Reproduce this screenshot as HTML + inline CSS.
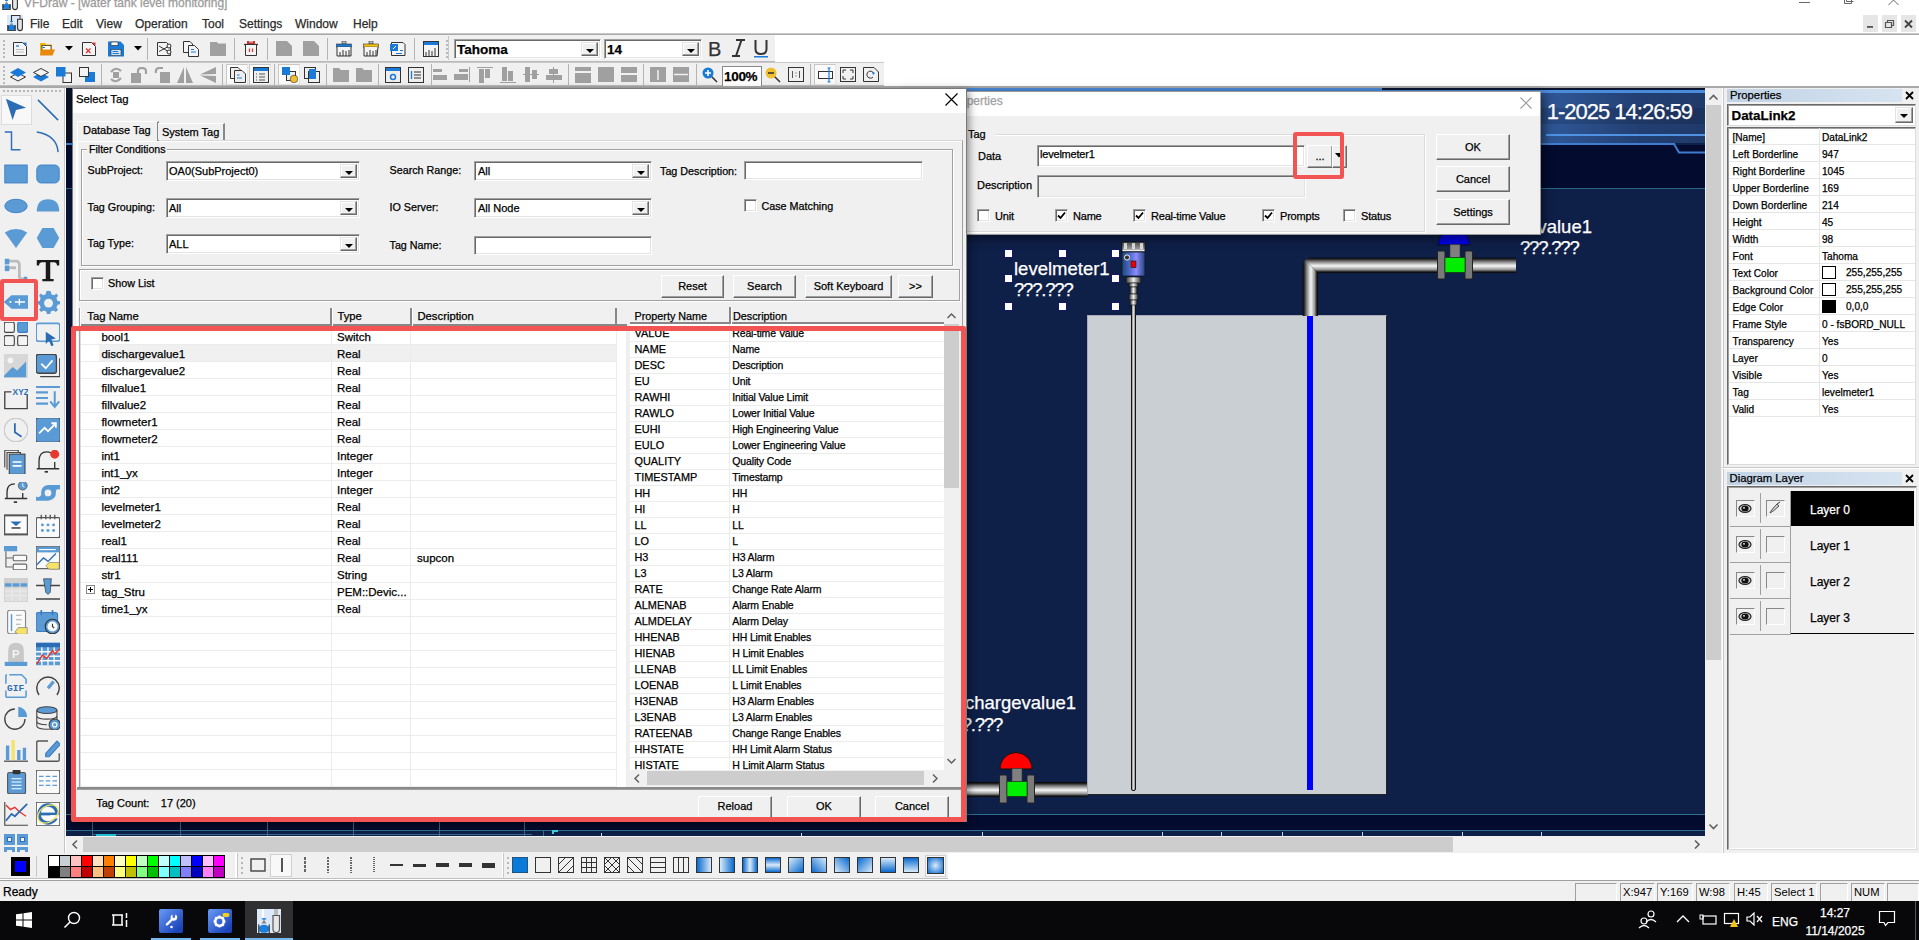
<!DOCTYPE html><html><head><meta charset="utf-8"><style>
*{box-sizing:border-box;margin:0;padding:0}
html,body{width:1919px;height:940px;overflow:hidden;background:#fff;font-family:"Liberation Sans",sans-serif;font-size:11px;color:#000;position:relative}
.a{position:absolute}
.t{position:absolute;white-space:nowrap;line-height:1;-webkit-text-stroke:0.25px currentColor}
.btn{position:absolute;background:#f0f0f0;border-top:1px solid #fff;border-left:1px solid #fff;border-right:1px solid #696969;border-bottom:1px solid #696969;box-shadow:inset -1px -1px 0 #a0a0a0;font-size:11px}
.btn span{position:absolute;left:0;right:0;text-align:center;white-space:nowrap;line-height:1;-webkit-text-stroke:0.25px currentColor}
.cb{position:absolute;width:13px;height:13px;background:#fff;border-top:1px solid #a0a0a0;border-left:1px solid #a0a0a0;border-right:1px solid #fff;border-bottom:1px solid #fff;box-shadow:inset 1px 1px 0 #696969, inset -1px -1px 0 #e3e3e3}
.sunk{position:absolute;background:#fff;border-top:1px solid #a0a0a0;border-left:1px solid #a0a0a0;border-right:1px solid #fff;border-bottom:1px solid #fff;box-shadow:inset 1px 1px 0 #696969, inset -1px -1px 0 #e3e3e3}
.dd{position:absolute;right:2px;top:2px;bottom:2px;width:17px;background:#f0f0f0;border-top:1px solid #e3e3e3;border-left:1px solid #e3e3e3;border-right:1px solid #696969;border-bottom:1px solid #696969;box-shadow:inset -1px -1px 0 #a0a0a0, inset 1px 1px 0 #fff}
.dd:after{content:"";position:absolute;left:4px;top:6px;border-left:4px solid transparent;border-right:4px solid transparent;border-top:4px solid #000}
.hl{position:absolute;height:1px}
.vl{position:absolute;width:1px}
</style></head><body><div class="a" style="left:0px;top:0px;width:1919px;height:34px;background:#fff;"></div>
<div class="t" style="left:24px;top:-3.20px;font-size:12px;color:#9a9a9a;">VFDraw - [water tank level monitoring]</div>
<svg class="a" style="left:2px;top:-6px;" width="17" height="17" viewBox="0 0 17 17"><rect x="0" y="0" width="9" height="6" fill="#e6eefa"/><path d="M4.5 6 V0.5 H13 V4" fill="none" stroke="#333" stroke-width="1.1"/><rect x="12.5" y="0.8" width="1" height="3.5" fill="#999"/><path d="M10.6 4.2 H15.4 V13 Q15.4 15.6 13 15.6 Q10.6 15.6 10.6 13Z" fill="#e6e6e6" stroke="#333" stroke-width="1.1"/><ellipse cx="4.5" cy="6.5" rx="1.6" ry="0.7" fill="#1a80e0"/><path d="M4.5 7 L2.6 10 H6.4Z" fill="#999"/><ellipse cx="4.5" cy="12.6" rx="3.6" ry="2.9" fill="#1a80e0"/><rect x="0.3" y="10" width="1.3" height="5.6" fill="#222"/><rect x="7.4" y="10" width="1.3" height="5.6" fill="#222"/><rect x="0.3" y="15" width="8.4" height="0.8" fill="#222"/></svg>
<div class="a" style="left:1799px;top:2px;width:11px;height:1px;background:#666"></div>
<svg class="a" style="left:1842px;top:0px;" width="12" height="6" viewBox="0 0 12 6"><path d="M2.5 0 V3.5 H9.5 V0 M4.5 0 V1.5 H11.5" fill="none" stroke="#666" stroke-width="1"/></svg>
<svg class="a" style="left:1888px;top:0px;" width="12" height="6" viewBox="0 0 12 6"><path d="M0.5 5 L5.5 0 L10.5 5" fill="none" stroke="#666" stroke-width="1"/></svg>
<svg class="a" style="left:7px;top:15px;" width="17" height="17" viewBox="0 0 17 17"><rect x="0" y="0" width="16" height="16" fill="#dde9f8"/><path d="M4.5 6 V0.5 H13 V4" fill="none" stroke="#333" stroke-width="1.1"/><rect x="12.5" y="0.8" width="1" height="3.5" fill="#999"/><path d="M10.6 4.2 H15.4 V13 Q15.4 15.6 13 15.6 Q10.6 15.6 10.6 13Z" fill="#e6e6e6" stroke="#333" stroke-width="1.1"/><ellipse cx="4.5" cy="6.5" rx="1.6" ry="0.7" fill="#1a80e0"/><path d="M4.5 7 L2.6 10 H6.4Z" fill="#999"/><ellipse cx="4.5" cy="12.6" rx="3.6" ry="2.9" fill="#1a80e0"/><rect x="0.3" y="10" width="1.3" height="5.6" fill="#222"/><rect x="7.4" y="10" width="1.3" height="5.6" fill="#222"/><rect x="0.3" y="15" width="8.4" height="0.8" fill="#222"/></svg>
<div class="t" style="left:30px;top:17.80px;font-size:12px;color:#2b2b2b;">File</div>
<div class="t" style="left:62px;top:17.80px;font-size:12px;color:#2b2b2b;">Edit</div>
<div class="t" style="left:96px;top:17.80px;font-size:12px;color:#2b2b2b;">View</div>
<div class="t" style="left:135px;top:17.80px;font-size:12px;color:#2b2b2b;">Operation</div>
<div class="t" style="left:202px;top:17.80px;font-size:12px;color:#2b2b2b;">Tool</div>
<div class="t" style="left:239px;top:17.80px;font-size:12px;color:#2b2b2b;">Settings</div>
<div class="t" style="left:295px;top:17.80px;font-size:12px;color:#2b2b2b;">Window</div>
<div class="t" style="left:353px;top:17.80px;font-size:12px;color:#2b2b2b;">Help</div>
<div class="a" style="left:1863px;top:15px;width:15px;height:17px;background:#e6e6e6;"></div>
<div class="a" style="left:1882px;top:15px;width:15px;height:17px;background:#e6e6e6;"></div>
<div class="a" style="left:1901px;top:15px;width:15px;height:17px;background:#e6e6e6;"></div>
<svg class="a" style="left:1863px;top:15px;" width="15" height="17" viewBox="0 0 15 17"><rect x="4" y="11" width="6" height="1.8" fill="#555"/></svg>
<svg class="a" style="left:1882px;top:15px;" width="15" height="17" viewBox="0 0 15 17"><path d="M3.5 7.5 h6 v5 h-6z M5.5 7.5 v-2 h6 v5 h-2" fill="none" stroke="#555" stroke-width="1.2"/></svg>
<svg class="a" style="left:1901px;top:15px;" width="15" height="17" viewBox="0 0 15 17"><path d="M4 5.5 L11 12.5 M11 5.5 L4 12.5" stroke="#444" stroke-width="1.8"/></svg>
<div class="a" style="left:0px;top:33px;width:1919px;height:2px;background:#c8c8c8;"></div>
<div class="a" style="left:0px;top:34px;width:1919px;height:1px;background:#a9a9a9;"></div>
<div class="a" style="left:0px;top:35px;width:1919px;height:53px;background:#fff;"></div>
<div class="a" style="left:0px;top:35px;width:775px;height:27px;background:#f0f0f0;"></div>
<div class="a" style="left:0px;top:61px;width:775px;height:1px;background:#b9b9b9;"></div>
<div class="a" style="left:0px;top:62px;width:884px;height:1px;background:#c9c9c9;"></div>
<div class="a" style="left:0px;top:63px;width:884px;height:23px;background:#f0f0f0;"></div>
<div class="a" style="left:0px;top:85px;width:884px;height:1px;background:#bcbcbc;"></div>
<div class="a" style="left:0px;top:86px;width:1919px;height:2px;background:#a9a9a9;"></div>
<div class="a" style="left:3px;top:40px;width:2px;height:2px;background:#b8b8b8;"></div>
<div class="a" style="left:3px;top:44px;width:2px;height:2px;background:#b8b8b8;"></div>
<div class="a" style="left:3px;top:48px;width:2px;height:2px;background:#b8b8b8;"></div>
<div class="a" style="left:3px;top:52px;width:2px;height:2px;background:#b8b8b8;"></div>
<div class="a" style="left:3px;top:56px;width:2px;height:2px;background:#b8b8b8;"></div>
<div class="a" style="left:3px;top:66px;width:2px;height:2px;background:#b8b8b8;"></div>
<div class="a" style="left:3px;top:70px;width:2px;height:2px;background:#b8b8b8;"></div>
<div class="a" style="left:3px;top:74px;width:2px;height:2px;background:#b8b8b8;"></div>
<div class="a" style="left:3px;top:78px;width:2px;height:2px;background:#b8b8b8;"></div>
<div class="a" style="left:3px;top:82px;width:2px;height:2px;background:#b8b8b8;"></div>
<div class="a" style="left:446px;top:40px;width:2px;height:2px;background:#b8b8b8;"></div>
<div class="a" style="left:446px;top:44px;width:2px;height:2px;background:#b8b8b8;"></div>
<div class="a" style="left:446px;top:48px;width:2px;height:2px;background:#b8b8b8;"></div>
<div class="a" style="left:446px;top:52px;width:2px;height:2px;background:#b8b8b8;"></div>
<div class="a" style="left:446px;top:56px;width:2px;height:2px;background:#b8b8b8;"></div>
<div class="a" style="left:0px;top:88px;width:65px;height:767px;background:#f0f0f0;"></div>
<div class="a" style="left:64px;top:88px;width:1px;height:767px;background:#c6c6c6;"></div>
<div class="a" style="left:3px;top:90px;width:2px;height:2px;background:#b8b8b8;"></div>
<div class="a" style="left:7px;top:90px;width:2px;height:2px;background:#b8b8b8;"></div>
<div class="a" style="left:11px;top:90px;width:2px;height:2px;background:#b8b8b8;"></div>
<div class="a" style="left:15px;top:90px;width:2px;height:2px;background:#b8b8b8;"></div>
<div class="a" style="left:19px;top:90px;width:2px;height:2px;background:#b8b8b8;"></div>
<div class="a" style="left:23px;top:90px;width:2px;height:2px;background:#b8b8b8;"></div>
<div class="a" style="left:27px;top:90px;width:2px;height:2px;background:#b8b8b8;"></div>
<div class="a" style="left:31px;top:90px;width:2px;height:2px;background:#b8b8b8;"></div>
<div class="a" style="left:35px;top:90px;width:2px;height:2px;background:#b8b8b8;"></div>
<div class="a" style="left:39px;top:90px;width:2px;height:2px;background:#b8b8b8;"></div>
<div class="a" style="left:43px;top:90px;width:2px;height:2px;background:#b8b8b8;"></div>
<div class="a" style="left:47px;top:90px;width:2px;height:2px;background:#b8b8b8;"></div>
<div class="a" style="left:51px;top:90px;width:2px;height:2px;background:#b8b8b8;"></div>
<div class="a" style="left:55px;top:90px;width:2px;height:2px;background:#b8b8b8;"></div>
<div class="a" style="left:59px;top:90px;width:2px;height:2px;background:#b8b8b8;"></div>
<svg class="a" style="left:12px;top:41px;" width="16" height="16" viewBox="0 0 16 16"><path d="M1.5 1.5 H10.5 L14.5 5.5 V14.5 H1.5Z" fill="#f4f4f4" stroke="#333"/><path d="M11 1.5 L14.5 5 V1.5Z" fill="#1a7ad8"/><path d="M4 5 H7" stroke="#1a7ad8" stroke-width="1.3"/><path d="M4 8.5 H12 M4 11 H12" stroke="#bbb"/></svg>
<svg class="a" style="left:39px;top:41px;" width="16" height="16" viewBox="0 0 16 16"><path d="M1 2 H6 L7.5 3.5 H13 V14 H1Z" fill="#f5b400"/><rect x="3" y="4.5" width="9" height="6" fill="#fff" stroke="#333" stroke-width="0.8"/><path d="M3.5 6.5 H6" stroke="#1a7ad8"/><path d="M1 14.5 L3 8.5 H16 L13.5 14.5Z" fill="#e8890c"/></svg>
<svg class="a" style="left:65px;top:46px;" width="8" height="5" viewBox="0 0 8 5"><path d="M0 0 H8 L4 4.5Z" fill="#000"/></svg>
<svg class="a" style="left:81px;top:41px;" width="16" height="16" viewBox="0 0 16 16"><path d="M1.5 1.5 H10.5 L14.5 5.5 V14.5 H1.5Z" fill="#f4f4f4" stroke="#333"/><path d="M11 1.5 L14.5 5 V1.5Z" fill="#e03030"/><path d="M5 7.5 L9.5 12 M9.5 7.5 L5 12" stroke="#e03030" stroke-width="1.2"/></svg>
<svg class="a" style="left:108px;top:41px;" width="16" height="16" viewBox="0 0 16 16"><path d="M0 0.5 H12.5 L16 4 V15.5 H0Z" fill="#1a7ad8"/><rect x="3" y="1" width="7" height="3.5" fill="#fff" stroke="#333" stroke-width="0.7"/><rect x="3" y="8.5" width="10" height="6" fill="#cfe3f7" stroke="#333" stroke-width="0.6"/><path d="M4.5 10.5 H10 M4.5 12.5 H11" stroke="#1a7ad8"/></svg>
<svg class="a" style="left:134px;top:46px;" width="8" height="5" viewBox="0 0 8 5"><path d="M0 0 H8 L4 4.5Z" fill="#000"/></svg>
<div class="a" style="left:147px;top:38px;width:1px;height:22px;background:#b4b4b4;"></div>
<svg class="a" style="left:156px;top:41px;" width="16" height="16" viewBox="0 0 16 16"><path d="M1.5 1.5 H10.5 L14.5 5.5 V14.5 H1.5Z" fill="#f4f4f4" stroke="#333"/><circle cx="13" cy="5" r="2" fill="#f4f4f4" stroke="#333"/><circle cx="13" cy="11" r="2" fill="#f4f4f4" stroke="#333"/><path d="M3 5 L11.5 10 M3 10.5 L11.5 6" stroke="#333"/></svg>
<svg class="a" style="left:183px;top:41px;" width="16" height="16" viewBox="0 0 16 16"><path d="M0.5 0.5 H7 L9.5 3 V11.5 H0.5Z" fill="#f4f4f4" stroke="#333"/><path d="M5.5 4.5 H11.5 L15.5 8.5 V15.5 H5.5Z" fill="#f4f4f4" stroke="#333"/><path d="M8 8.5 H11 M8 11 H13" stroke="#1a7ad8" stroke-width="1.2"/></svg>
<svg class="a" style="left:210px;top:41px;" width="16" height="16" viewBox="0 0 16 16"><path d="M0 1 H7 L8 2.5 H16 V15 H0Z" fill="#a0a0a0"/></svg>
<div class="a" style="left:234px;top:38px;width:1px;height:22px;background:#b4b4b4;"></div>
<svg class="a" style="left:243px;top:41px;" width="16" height="16" viewBox="0 0 16 16"><rect x="4" y="0" width="8" height="3" fill="#e03030"/><path d="M1 3.5 H15" stroke="#333" stroke-width="1.3"/><path d="M2.5 4 V14.5 H13.5 V4" fill="#f4f4f4" stroke="#333"/><path d="M6.5 7.5 V11 M9.5 7.5 V11" stroke="#e03030" stroke-width="1.2"/><rect x="6" y="0" width="4" height="1.5" fill="#bbb"/></svg>
<div class="a" style="left:267px;top:38px;width:1px;height:22px;background:#b4b4b4;"></div>
<svg class="a" style="left:276px;top:41px;" width="16" height="16" viewBox="0 0 16 16"><path d="M0 0 H11 L16 5 V15 H0Z" fill="#a0a0a0"/></svg>
<svg class="a" style="left:303px;top:41px;" width="16" height="16" viewBox="0 0 16 16"><path d="M0 0 H11 L16 5 V15 H0Z" fill="#a0a0a0"/></svg>
<div class="a" style="left:327px;top:38px;width:1px;height:22px;background:#b4b4b4;"></div>
<svg class="a" style="left:336px;top:41px;" width="16" height="16" viewBox="0 0 16 16"><rect x="6" y="0" width="4" height="3" fill="#bbb" stroke="#333" stroke-width="0.6"/><rect x="0.5" y="3" width="15" height="3" fill="#1a7ad8" stroke="#333" stroke-width="0.6"/><path d="M1 6 V15 H15 V6" fill="#f4f4f4" stroke="#333"/><path d="M4 15 V11 M7 15 V9 M10 15 V10 M13 15 V9" stroke="#333"/></svg>
<svg class="a" style="left:363px;top:41px;" width="16" height="16" viewBox="0 0 16 16"><rect x="6" y="0" width="4" height="3" fill="#bbb" stroke="#333" stroke-width="0.6"/><rect x="0.5" y="3" width="15" height="3" fill="#f5c518" stroke="#333" stroke-width="0.6"/><path d="M1 6 L1 15 H14 L15 6" fill="#f4f4f4" stroke="#333"/><path d="M4 15 V11 M7 15 V9 M10 15 V10 M13 15 V9" stroke="#333"/></svg>
<svg class="a" style="left:390px;top:41px;" width="16" height="16" viewBox="0 0 16 16"><path d="M1.5 1.5 H13 L15 3.5 V14.5 H1.5Z" fill="#f4f4f4" stroke="#333"/><rect x="0" y="3" width="8" height="7" fill="#1a7ad8"/><path d="M3 8 L6 5" stroke="#fff"/><path d="M10 9.5 H13 M6 12.5 H12" stroke="#1a7ad8" stroke-width="1.2"/></svg>
<div class="a" style="left:414px;top:38px;width:1px;height:22px;background:#b4b4b4;"></div>
<svg class="a" style="left:423px;top:41px;" width="16" height="16" viewBox="0 0 16 16"><rect x="0.5" y="0.5" width="15" height="15" fill="#f4f4f4" stroke="#333"/><rect x="1" y="1" width="14" height="3" fill="#1a7ad8"/><path d="M3 15 V11 M6 15 V9 M9 15 V10 M12 15 V7" stroke="#333"/></svg>
<div class="a" style="left:448px;top:36px;width:1px;height:24px;background:#c8c8c8;"></div>
<div class="sunk" style="left:454px;top:39px;width:147px;height:20px"><div class="dd"></div></div>
<div class="t" style="left:457px;top:42.53px;font-size:13.5px;color:#000;font-weight:bold">Tahoma</div>
<div class="sunk" style="left:604px;top:39px;width:98px;height:20px"><div class="dd"></div></div>
<div class="t" style="left:607px;top:42.53px;font-size:13.5px;color:#000;font-weight:bold">14</div>
<div class="t" style="left:708px;top:39.00px;font-size:20px;color:#333;">B</div>
<svg class="a" style="left:731px;top:39px;" width="15" height="18" viewBox="0 0 15 18"><path d="M5 1 H14 M1 17 H9 M10.5 1 L5 17" stroke="#333" stroke-width="2" fill="none"/></svg>
<svg class="a" style="left:754px;top:39px;" width="14" height="19" viewBox="0 0 14 19"><path d="M1.5 1 V10 Q1.5 15 7 15 Q12.5 15 12.5 10 V1" stroke="#333" stroke-width="2" fill="none"/><rect x="0" y="17" width="14" height="1.5" fill="#1a7ad8"/></svg>
<svg class="a" style="left:10px;top:67px;" width="16" height="16" viewBox="0 0 16 16"><path d="M0.5 10 L8 6 L15.5 10 L8 14Z" fill="#f4f4f4" stroke="#333"/><path d="M0 5.5 L8 1 L16 5.5 L8 10Z" fill="#1a7ad8"/></svg>
<svg class="a" style="left:33px;top:67px;" width="16" height="16" viewBox="0 0 16 16"><path d="M0 10 L8 5.5 L16 10 L8 14.5Z" fill="#1a7ad8"/><path d="M0.5 5.5 L8 1.5 L15.5 5.5 L8 9.5Z" fill="#f4f4f4" stroke="#333"/></svg>
<svg class="a" style="left:56px;top:67px;" width="16" height="16" viewBox="0 0 16 16"><rect x="7" y="6" width="8.5" height="9.5" fill="#f4f4f4" stroke="#333"/><rect x="0" y="0" width="9.5" height="9.5" fill="#1a7ad8"/></svg>
<svg class="a" style="left:79px;top:67px;" width="16" height="16" viewBox="0 0 16 16"><rect x="6" y="5" width="10" height="10" fill="#1a7ad8"/><rect x="0.5" y="0.5" width="9" height="9" fill="#f4f4f4" stroke="#333"/></svg>
<div class="a" style="left:101px;top:64px;width:1px;height:21px;background:#b4b4b4;"></div>
<svg class="a" style="left:108px;top:67px;" width="16" height="16" viewBox="0 0 16 16"><path d="M3 5 Q8 -1 13 4 M13 11 Q8 17 3 12" fill="none" stroke="#a0a0a0" stroke-width="2.2"/><rect x="5" y="5" width="6" height="6" fill="#a0a0a0"/></svg>
<svg class="a" style="left:131px;top:67px;" width="16" height="16" viewBox="0 0 16 16"><rect x="0" y="6" width="10" height="10" fill="#a0a0a0"/><path d="M7 7 V4 Q7 1 11 1 Q15 1 15 4 V7" fill="none" stroke="#a0a0a0" stroke-width="2.2"/></svg>
<svg class="a" style="left:154px;top:67px;" width="16" height="16" viewBox="0 0 16 16"><rect x="6" y="5" width="10" height="11" fill="#a0a0a0"/><path d="M2 6 Q1 1 6 1 H9" fill="none" stroke="#a0a0a0" stroke-width="2.2"/></svg>
<svg class="a" style="left:177px;top:67px;" width="16" height="16" viewBox="0 0 16 16"><path d="M7 0 V16 H0Z M9 0 V16 H16Z" fill="#a0a0a0"/></svg>
<svg class="a" style="left:200px;top:67px;" width="16" height="16" viewBox="0 0 16 16"><path d="M16 0 V7 L0 7.5Z M16 9 V16 L0 8.5Z" fill="#a0a0a0"/></svg>
<div class="a" style="left:222px;top:64px;width:1px;height:21px;background:#b4b4b4;"></div>
<div class="a" style="left:226px;top:64px;width:22px;height:21px;background:#fbfbfb;border-left:1px solid #c8c8c8;border-top:1px solid #c8c8c8;border-right:1px solid #e6e6e6;border-bottom:1px solid #e6e6e6"></div>
<div class="a" style="left:249px;top:64px;width:22px;height:21px;background:#fbfbfb;border-left:1px solid #c8c8c8;border-top:1px solid #c8c8c8;border-right:1px solid #e6e6e6;border-bottom:1px solid #e6e6e6"></div>
<svg class="a" style="left:230px;top:67px;" width="16" height="16" viewBox="0 0 16 16"><path d="M0.5 0.5 H8 L10 2.5 V11.5 H0.5Z" fill="#eee" stroke="#333"/><path d="M4.5 3.5 H12 L15.5 7 V15.5 H4.5Z" fill="#eee" stroke="#333"/><path d="M7 8 H9.5 M7 11 H12" stroke="#1a7ad8"/></svg>
<svg class="a" style="left:253px;top:67px;" width="16" height="16" viewBox="0 0 16 16"><rect x="0.5" y="0.5" width="15" height="15" fill="#eee" stroke="#333"/><rect x="1" y="1" width="14" height="3" fill="#1a7ad8"/><path d="M3 7 h1 M6 7 H12 M3 10 h1 M6 10 H12 M3 13 h1 M6 13 H12" stroke="#555"/></svg>
<div class="a" style="left:274px;top:64px;width:1px;height:21px;background:#b4b4b4;"></div>
<div class="a" style="left:278px;top:64px;width:22px;height:21px;background:#fbfbfb;border-left:1px solid #c8c8c8;border-top:1px solid #c8c8c8;border-right:1px solid #e6e6e6;border-bottom:1px solid #e6e6e6"></div>
<svg class="a" style="left:282px;top:67px;" width="16" height="16" viewBox="0 0 16 16"><rect x="4.5" y="4.5" width="9" height="9" fill="#eee" stroke="#333"/><rect x="0" y="0" width="8" height="8" fill="#1a7ad8"/><circle cx="12" cy="12" r="3.8" fill="#f0c030" stroke="#333" stroke-width="0.6"/></svg>
<svg class="a" style="left:304px;top:67px;" width="16" height="16" viewBox="0 0 16 16"><rect x="0.5" y="0.5" width="11" height="11" fill="#eee" stroke="#333"/><rect x="4.5" y="4.5" width="11" height="11" fill="none" stroke="#333"/><rect x="5" y="2" width="7" height="10" fill="#1a7ad8"/></svg>
<div class="a" style="left:326px;top:64px;width:1px;height:21px;background:#b4b4b4;"></div>
<svg class="a" style="left:333px;top:67px;" width="16" height="16" viewBox="0 0 16 16"><path d="M0 1 H6 L8 3 H16 V15 H0Z" fill="#a0a0a0"/></svg>
<svg class="a" style="left:356px;top:67px;" width="16" height="16" viewBox="0 0 16 16"><path d="M0 1 H6 L8 3 H16 V15 H0Z" fill="#a0a0a0"/></svg>
<div class="a" style="left:378px;top:64px;width:1px;height:21px;background:#b4b4b4;"></div>
<svg class="a" style="left:385px;top:67px;" width="16" height="16" viewBox="0 0 16 16"><rect x="0.5" y="0.5" width="15" height="15" fill="#eee" stroke="#333"/><rect x="1" y="1" width="14" height="3" fill="#1a7ad8"/><circle cx="8" cy="10" r="2.5" fill="none" stroke="#1a7ad8" stroke-width="1.5"/></svg>
<svg class="a" style="left:408px;top:67px;" width="16" height="16" viewBox="0 0 16 16"><rect x="0.5" y="0.5" width="15" height="15" fill="#eee" stroke="#333"/><path d="M3.5 4 V12" stroke="#1a7ad8" stroke-width="1.3"/><path d="M6 5 H13 M6 8 H13 M6 11 H13" stroke="#333"/></svg>
<div class="a" style="left:431px;top:64px;width:1px;height:21px;background:#b4b4b4;"></div>
<svg class="a" style="left:433px;top:67px;" width="16" height="16" viewBox="0 0 16 16"><rect x="0" y="2" width="9" height="3" fill="#a0a0a0"/><rect x="0" y="8" width="14" height="5" fill="#a0a0a0"/></svg>
<svg class="a" style="left:454px;top:67px;" width="16" height="16" viewBox="0 0 16 16"><rect x="5" y="2" width="9" height="3" fill="#a0a0a0"/><rect x="0" y="7" width="14" height="6" fill="#a0a0a0"/><rect x="15" y="0" width="1" height="15" fill="#a0a0a0"/></svg>
<svg class="a" style="left:477px;top:67px;" width="16" height="16" viewBox="0 0 16 16"><rect x="0" y="0" width="16" height="1" fill="#a0a0a0"/><rect x="2" y="2" width="5" height="14" fill="#a0a0a0"/><rect x="8" y="2" width="5" height="9" fill="#a0a0a0"/></svg>
<svg class="a" style="left:500px;top:67px;" width="16" height="16" viewBox="0 0 16 16"><rect x="0" y="15" width="16" height="1" fill="#a0a0a0"/><rect x="2" y="0" width="5" height="14" fill="#a0a0a0"/><rect x="8" y="4" width="5" height="10" fill="#a0a0a0"/></svg>
<svg class="a" style="left:523px;top:67px;" width="16" height="16" viewBox="0 0 16 16"><rect x="0" y="7" width="16" height="1" fill="#a0a0a0"/><rect x="2" y="0" width="5" height="15" fill="#a0a0a0"/><rect x="9" y="3" width="5" height="9" fill="#a0a0a0"/></svg>
<svg class="a" style="left:546px;top:67px;" width="16" height="16" viewBox="0 0 16 16"><rect x="7" y="0" width="1" height="16" fill="#a0a0a0"/><rect x="3" y="2" width="9" height="5" fill="#a0a0a0"/><rect x="0" y="8" width="16" height="5" fill="#a0a0a0"/></svg>
<div class="a" style="left:568px;top:64px;width:1px;height:21px;background:#b4b4b4;"></div>
<svg class="a" style="left:575px;top:67px;" width="16" height="16" viewBox="0 0 16 16"><rect x="0" y="0" width="16" height="4" fill="#a0a0a0"/><rect x="0" y="6" width="16" height="10" fill="#a0a0a0"/></svg>
<svg class="a" style="left:598px;top:67px;" width="16" height="16" viewBox="0 0 16 16"><rect x="0" y="0" width="16" height="15" fill="#a0a0a0"/></svg>
<svg class="a" style="left:621px;top:67px;" width="16" height="16" viewBox="0 0 16 16"><rect x="0" y="0" width="16" height="6" fill="#a0a0a0"/><rect x="0" y="8" width="16" height="7" fill="#a0a0a0"/></svg>
<div class="a" style="left:643px;top:64px;width:1px;height:21px;background:#b4b4b4;"></div>
<svg class="a" style="left:650px;top:67px;" width="16" height="16" viewBox="0 0 16 16"><rect x="0" y="0" width="16" height="15" fill="#a0a0a0"/><path d="M8 3 V13" stroke="#f0f0f0" stroke-width="1.5"/></svg>
<svg class="a" style="left:673px;top:67px;" width="16" height="16" viewBox="0 0 16 16"><rect x="0" y="0" width="16" height="15" fill="#a0a0a0"/><path d="M1 7.5 H15" stroke="#f0f0f0" stroke-width="1.5"/></svg>
<div class="a" style="left:696px;top:64px;width:1px;height:21px;background:#b4b4b4;"></div>
<svg class="a" style="left:702px;top:67px;" width="16" height="16" viewBox="0 0 16 16"><path d="M9 9 L15 15" stroke="#333" stroke-width="1.6"/><circle cx="6" cy="6" r="5.5" fill="#1a7ad8"/><path d="M6 3 V9 M3 6 H9" stroke="#fff" stroke-width="1.6"/></svg>
<div class="a" style="left:722px;top:66px;width:40px;height:20px;background:#fff;border:1px solid #888;border-bottom:none"></div>
<div class="t" style="left:724px;top:69.53px;font-size:13.5px;color:#000;font-weight:bold;letter-spacing:-0.3px">100%</div>
<svg class="a" style="left:765px;top:67px;" width="16" height="16" viewBox="0 0 16 16"><path d="M9 9 L15 15" stroke="#333" stroke-width="1.6"/><circle cx="6" cy="6" r="5.5" fill="#f0c030"/><path d="M3 6 H9" stroke="#333" stroke-width="1.6"/></svg>
<svg class="a" style="left:788px;top:67px;" width="16" height="16" viewBox="0 0 16 16"><rect x="0.5" y="0.5" width="15" height="14" fill="none" stroke="#333"/><path d="M4.5 4 V11 M11.5 4 V11" stroke="#555"/><path d="M8 5.5 V6.5 M8 8.5 V9.5" stroke="#555"/></svg>
<div class="a" style="left:810px;top:64px;width:1px;height:21px;background:#b4b4b4;"></div>
<div class="a" style="left:814px;top:64px;width:22px;height:21px;background:#fbfbfb;border-left:1px solid #c8c8c8;border-top:1px solid #c8c8c8;border-right:1px solid #e6e6e6;border-bottom:1px solid #e6e6e6"></div>
<svg class="a" style="left:818px;top:67px;" width="16" height="16" viewBox="0 0 16 16"><rect x="0.5" y="4.5" width="14" height="7" fill="none" stroke="#333"/><path d="M11 1 V15 M9.5 1 H12.5 M9.5 15 H12.5" stroke="#1a7ad8" stroke-width="1.2"/></svg>
<svg class="a" style="left:840px;top:67px;" width="16" height="16" viewBox="0 0 16 16"><rect x="0.5" y="0.5" width="15" height="14" fill="none" stroke="#333"/><path d="M3 6 V3 H6 M10 3 H13 V6 M13 9 V12 H10 M6 12 H3 V9" fill="none" stroke="#333"/></svg>
<svg class="a" style="left:863px;top:67px;" width="16" height="16" viewBox="0 0 16 16"><path d="M0.5 0.5 H11 L15.5 5 V14.5 H0.5Z" fill="none" stroke="#333"/><path d="M10.5 6 A3.5 3.5 0 1 0 10 10" fill="none" stroke="#333"/><path d="M9 4.5 L12 6 L10 8" fill="#1a7ad8"/></svg>
<div class="a" style="left:1px;top:95px;width:31px;height:30px;background:#f8f8f8;border:1px solid #dcdcdc"></div>
<svg class="a" style="left:4px;top:98px" width="24" height="24" viewBox="1.3 1.3 21.4 21.4"><path d="M3 2 L21 10 L12 12 L9 21Z" fill="#2c6cb5"/></svg>
<svg class="a" style="left:36px;top:98px" width="24" height="24" viewBox="1.3 1.3 21.4 21.4"><path d="M3 3 L21 21" stroke="#2c6cb5" stroke-width="1.4"/></svg>
<svg class="a" style="left:4px;top:130px" width="24" height="24" viewBox="1.3 1.3 21.4 21.4"><path d="M2 3 H8 V19 H16" fill="none" stroke="#2f6fb8" stroke-width="1.3"/></svg>
<svg class="a" style="left:36px;top:130px" width="24" height="24" viewBox="1.3 1.3 21.4 21.4"><path d="M2 3 Q20 6 21 21" fill="none" stroke="#2f6fb8" stroke-width="1.3"/></svg>
<svg class="a" style="left:4px;top:162px" width="24" height="24" viewBox="1.3 1.3 21.4 21.4"><rect x="2" y="4" width="20" height="16" fill="#5b9bd5" stroke="#3a7cc4" stroke-width="0.8"/></svg>
<svg class="a" style="left:36px;top:162px" width="24" height="24" viewBox="1.3 1.3 21.4 21.4"><rect x="2" y="4" width="20" height="16" rx="4" fill="#5b9bd5" stroke="#3a7cc4" stroke-width="0.8"/></svg>
<svg class="a" style="left:4px;top:194px" width="24" height="24" viewBox="1.3 1.3 21.4 21.4"><ellipse cx="12" cy="12" rx="10" ry="6" fill="#5b9bd5" stroke="#3a7cc4" stroke-width="0.8"/></svg>
<svg class="a" style="left:36px;top:194px" width="24" height="24" viewBox="1.3 1.3 21.4 21.4"><path d="M2 17 Q2 6 12 6 Q22 6 22 17Z" fill="#5b9bd5"/></svg>
<svg class="a" style="left:4px;top:226px" width="24" height="24" viewBox="1.3 1.3 21.4 21.4"><path d="M2 7 Q12 1 22 7 L12 21Z" fill="#5b9bd5"/></svg>
<svg class="a" style="left:36px;top:226px" width="24" height="24" viewBox="1.3 1.3 21.4 21.4"><path d="M7 3 H17 L22 12 L17 21 H7 L2 12Z" fill="#5b9bd5"/></svg>
<svg class="a" style="left:4px;top:258px" width="24" height="24" viewBox="1.3 1.3 21.4 21.4"><path d="M5 4 H12 Q15 4 15 8 V18 Q15 20 18 20 H22 M5 10 H12" fill="none" stroke="#bbb" stroke-width="2.5"/><rect x="2" y="2" width="4" height="5" fill="#5b9bd5"/><rect x="2" y="8" width="4" height="5" fill="#5b9bd5"/><rect x="19" y="18" width="3" height="4" fill="#5b9bd5"/></svg>
<svg class="a" style="left:36px;top:258px" width="24" height="24" viewBox="1.3 1.3 21.4 21.4"><path d="M2 3 H22 V8 H20 Q20 5 17 5 H14 V20 H17 V22 H7 V20 H10 V5 H7 Q4 5 4 8 H2Z" fill="#1a1a1a"/></svg>
<svg class="a" style="left:4px;top:290px" width="24" height="24" viewBox="1.3 1.3 21.4 21.4"><path d="M1 12 L8 6 H23 V18 H8Z" fill="#5b9bd5"/><circle cx="7" cy="12" r="1" fill="#fff"/><path d="M11 12 H20 M15 9 V15" stroke="#fff" stroke-width="1.2"/></svg>
<svg class="a" style="left:36px;top:290px" width="24" height="24" viewBox="1.3 1.3 21.4 21.4"><path d="M12 2 L14.5 2.5 L15 5 L17.5 6 L19.5 4.5 L21 6.5 L19.5 8.5 L20.5 11 L23 11.5 V14 L20.5 14.5 L19.5 17 L21 19 L19 21 L17 19.5 L14.5 20.5 L14 23 H11 L10.5 20.5 L8 19.5 L6 21 L4 19 L5.5 17 L4.5 14.5 L2 14 V11.5 L4.5 11 L5.5 8.5 L4 6.5 L5.5 4.5 L7.5 6 L10 5 L10.5 2.5Z" fill="#5b9bd5"/><circle cx="12.5" cy="13" r="4" fill="#f0f0f0"/></svg>
<svg class="a" style="left:4px;top:322px" width="24" height="24" viewBox="1.3 1.3 21.4 21.4"><rect x="1.5" y="1.5" width="9" height="9" rx="1.5" fill="#f4f4f4" stroke="#444"/><rect x="13.5" y="1.5" width="9" height="9" rx="1.5" fill="#5b9bd5" stroke="#3a7cc4"/><rect x="1.5" y="13.5" width="9" height="9" rx="1.5" fill="#f4f4f4" stroke="#444"/><rect x="13.5" y="13.5" width="9" height="9" rx="1.5" fill="#f4f4f4" stroke="#444"/></svg>
<svg class="a" style="left:36px;top:322px" width="24" height="24" viewBox="1.3 1.3 21.4 21.4"><rect x="1.5" y="2.5" width="21" height="16" rx="2" fill="none" stroke="#5b9bd5" stroke-width="1.4"/><path d="M10 10 L19 16 L15 17 L17 22 L15 23 L13 18 L10 21Z" fill="#2c6cb5"/></svg>
<svg class="a" style="left:4px;top:354px" width="24" height="24" viewBox="1.3 1.3 21.4 21.4"><rect x="1" y="1" width="22" height="22" fill="#d7d7d7"/><circle cx="7" cy="7" r="2.5" fill="#f4f4f4"/><path d="M1 21 L9 13 L13 16 L21 8 V22 H1Z" fill="#5b9bd5"/></svg>
<svg class="a" style="left:36px;top:354px" width="24" height="24" viewBox="1.3 1.3 21.4 21.4"><path d="M5 21.5 H22.5 V5" fill="none" stroke="#444" stroke-width="1.2"/><rect x="1.5" y="1.5" width="18" height="17" rx="2" fill="#5b9bd5" stroke="#444" stroke-width="1.2"/><path d="M6 10 L10 14 L16 7" fill="none" stroke="#fff" stroke-width="1.6"/></svg>
<svg class="a" style="left:4px;top:386px" width="24" height="24" viewBox="1.3 1.3 21.4 21.4"><path d="M8 6.5 H2 V21.5 H22 V9" fill="none" stroke="#444" stroke-width="1.2"/><text x="9" y="9.5" font-size="7.5" font-weight="bold" fill="#2c6cb5" font-family="Liberation Sans">XYZ</text></svg>
<svg class="a" style="left:36px;top:386px" width="24" height="24" viewBox="1.3 1.3 21.4 21.4"><path d="M1 2 H23 M1 7 H12 M1 12 H12 M1 17 H12" stroke="#5b9bd5" stroke-width="2"/><path d="M18 6 V19 M14 15 L18 20 L22 15" fill="none" stroke="#5b9bd5" stroke-width="1.8"/></svg>
<svg class="a" style="left:4px;top:418px" width="24" height="24" viewBox="1.3 1.3 21.4 21.4"><circle cx="12" cy="12" r="10.5" fill="none" stroke="#ccc" stroke-width="1.2"/><path d="M11 6 V14 L17 18" fill="none" stroke="#2c6cb5" stroke-width="1.6"/></svg>
<svg class="a" style="left:36px;top:418px" width="24" height="24" viewBox="1.3 1.3 21.4 21.4"><rect x="1" y="1" width="22" height="22" rx="2" fill="#5b9bd5" stroke="#444" stroke-width="1.2"/><path d="M4 15 L9 10 L12 13 L19 6 M15 6 H19 V10" fill="none" stroke="#fff" stroke-width="1.6"/></svg>
<svg class="a" style="left:4px;top:450px" width="24" height="24" viewBox="1.3 1.3 21.4 21.4"><path d="M2 17 V1.5 H14 V3" fill="none" stroke="#444"/><path d="M4 19 V3.5 H16 V5" fill="none" stroke="#444"/><rect x="6" y="5" width="14" height="18" fill="#5b9bd5" stroke="#444"/><path d="M9 12 H17 M9 15.5 H17" stroke="#fff" stroke-width="1.5"/></svg>
<svg class="a" style="left:36px;top:450px" width="24" height="24" viewBox="1.3 1.3 21.4 21.4"><path d="M2 18 H22 M4 18 V11 Q4 3 11 3 Q15 3 17 6 M18 12 V18" fill="none" stroke="#333" stroke-width="1.2"/><rect x="9" y="20" width="3" height="1.5" fill="#333"/><circle cx="18" cy="5" r="4" fill="#e8392e"/></svg>
<svg class="a" style="left:4px;top:482px" width="24" height="24" viewBox="1.3 1.3 21.4 21.4"><path d="M2 16 H22 M4 16 V10 Q4 3 11 3 M18 11 V16" fill="none" stroke="#333" stroke-width="1.2"/><rect x="10" y="18.5" width="3" height="1.5" fill="#333"/><circle cx="18" cy="4.5" r="4" fill="#5b9bd5" stroke="#333" stroke-width="0.5"/><path d="M18 2.5 V5 L19.5 6" fill="none" stroke="#fff" stroke-width="0.8"/></svg>
<svg class="a" style="left:36px;top:482px" width="24" height="24" viewBox="1.3 1.3 21.4 21.4"><path d="M1 14 Q4 16 6 13 Q5 5 12 4 H23 V8 Q20 7 19 9 Q20 17 12 18 L5 18 H1Z" fill="#5b9bd5"/><circle cx="12" cy="11" r="3" fill="#f0f0f0"/></svg>
<svg class="a" style="left:4px;top:514px" width="24" height="24" viewBox="1.3 1.3 21.4 21.4"><rect x="1.5" y="2.5" width="21" height="17" fill="#fafafa" stroke="#555" stroke-width="1.8"/><path d="M7 8 H17 L12 12Z" fill="#2c6cb5"/><rect x="8" y="13" width="8" height="1.5" fill="#555"/></svg>
<svg class="a" style="left:36px;top:514px" width="24" height="24" viewBox="1.3 1.3 21.4 21.4"><rect x="1.5" y="4.5" width="21" height="18" rx="1.5" fill="#fafafa" stroke="#555" stroke-width="1.2"/><path d="M6 2 V6 M10 2 V6 M14 2 V6 M18 2 V6" stroke="#555" stroke-width="1.2"/><g fill="#5b9bd5"><circle cx="7" cy="11" r="1.3"/><circle cx="12" cy="11" r="1.3"/><circle cx="17" cy="11" r="1.3"/><circle cx="7" cy="16" r="1.3"/><circle cx="12" cy="16" r="1.3"/><circle cx="17" cy="16" r="1.3"/></g></svg>
<svg class="a" style="left:4px;top:546px" width="24" height="24" viewBox="1.3 1.3 21.4 21.4"><rect x="1" y="1" width="12" height="5" fill="#5b9bd5"/><path d="M3 6 V20 H9 M3 12 H9" fill="none" stroke="#666"/><rect x="9.5" y="9.5" width="12" height="5" rx="1" fill="#fafafa" stroke="#666"/><rect x="9.5" y="17.5" width="12" height="5" rx="1" fill="#fafafa" stroke="#666"/></svg>
<svg class="a" style="left:36px;top:546px" width="24" height="24" viewBox="1.3 1.3 21.4 21.4"><rect x="1.5" y="1.5" width="21" height="20" fill="#fafafa" stroke="#555"/><rect x="2" y="2" width="20" height="5" fill="#5b9bd5"/><path d="M4 4.5 H19" stroke="#fff"/><path d="M2 18 L8 12 L12 15 L19 8" fill="none" stroke="#2c6cb5" stroke-width="1.2"/><path d="M10 19 L13 16 H22 V22 H13Z" fill="#f5e36a" stroke="#777" stroke-width="0.6"/></svg>
<svg class="a" style="left:4px;top:578px" width="24" height="24" viewBox="1.3 1.3 21.4 21.4"><rect x="1" y="1" width="22" height="22" fill="#d0d0d0"/><rect x="2" y="6" width="6" height="3" fill="#5b9bd5"/><rect x="9" y="6" width="6" height="3" fill="#5b9bd5"/><rect x="16" y="6" width="6" height="3" fill="#5b9bd5"/><path d="M2 13 H22 M2 17 H22 M8.5 10 V22 M15.5 10 V22" stroke="#f0f0f0" stroke-width="0.8"/><rect x="2" y="10" width="20" height="12" fill="#eaeaea" opacity="0.6"/></svg>
<svg class="a" style="left:36px;top:578px" width="24" height="24" viewBox="1.3 1.3 21.4 21.4"><path d="M1 8 H23 M1 20 H23" stroke="#444" stroke-width="1.3"/><path d="M8 2 H15 L14 14 L12 16 L10 14Z" fill="#5b9bd5" stroke="#333" stroke-width="0.6"/></svg>
<svg class="a" style="left:4px;top:610px" width="24" height="24" viewBox="1.3 1.3 21.4 21.4"><rect x="4.5" y="1.5" width="16" height="21" rx="2" fill="#fafafa" stroke="#888"/><path d="M8 5 V20" stroke="#5b9bd5" stroke-width="1.3"/><path d="M12 6 H17 M12 10 H17 M12 14 H16" stroke="#aaa"/><path d="M11 21 L14 17 H22 V23 H14Z" fill="#f5e36a" stroke="#777" stroke-width="0.6"/></svg>
<svg class="a" style="left:36px;top:610px" width="24" height="24" viewBox="1.3 1.3 21.4 21.4"><rect x="1.5" y="3.5" width="19" height="17" rx="2" fill="#5b9bd5" stroke="#3a7cc4"/><path d="M6 1 V6 M16 1 V6" stroke="#3a7cc4" stroke-width="1.5"/><circle cx="16" cy="16" r="6.5" fill="#5b9bd5" stroke="#333"/><circle cx="16" cy="16" r="4.5" fill="#fafafa"/><path d="M16 13.5 V16 L17.5 17.5" fill="none" stroke="#333"/></svg>
<svg class="a" style="left:4px;top:642px" width="24" height="24" viewBox="1.3 1.3 21.4 21.4"><path d="M5 20 V9 Q5 2 12 2 Q19 2 19 9 V20Z" fill="#c8c8c8"/><text x="8.5" y="16" font-size="10" font-weight="bold" fill="#f4f4f4" font-family="Liberation Sans">P</text><rect x="2" y="19" width="20" height="4" fill="#5b9bd5"/></svg>
<svg class="a" style="left:36px;top:642px" width="24" height="24" viewBox="1.3 1.3 21.4 21.4"><rect x="1" y="2" width="22" height="20" fill="#5b9bd5"/><rect x="1" y="2" width="22" height="4" fill="#2c6cb5"/><path d="M1 10 H23 M1 14 H23 M1 18 H23 M6.5 6 V22 M12 6 V22 M17.5 6 V22" stroke="#fafafa" stroke-width="1.2"/><path d="M2 21 L7 13 L11 16 L16 9 L18 12 L23 7" fill="none" stroke="#e8392e" stroke-width="1.3"/></svg>
<svg class="a" style="left:4px;top:674px" width="24" height="24" viewBox="1.3 1.3 21.4 21.4"><path d="M6 2 H17 L21 6 V10 M21 16 V21 Q21 22 20 22 H4 Q3 22 3 21 V16 M3 10 V3 Q3 2 4 2" fill="none" stroke="#5b9bd5" stroke-width="1.4"/><text x="4" y="16.5" font-size="8.5" font-weight="bold" fill="#2c6cb5" font-family="Liberation Mono">GIF</text></svg>
<svg class="a" style="left:36px;top:674px" width="24" height="24" viewBox="1.3 1.3 21.4 21.4"><path d="M4 20 A10 10 0 1 1 20 20" fill="none" stroke="#444" stroke-width="1.3"/><path d="M12 14 L17 8" stroke="#5b9bd5" stroke-width="3"/></svg>
<svg class="a" style="left:4px;top:706px" width="24" height="24" viewBox="1.3 1.3 21.4 21.4"><path d="M11 4 A9 9 0 1 0 20 13" fill="none" stroke="#444" stroke-width="1.2"/><path d="M14 2 A9 9 0 0 1 22 11 H14Z" fill="#5b9bd5"/></svg>
<svg class="a" style="left:36px;top:706px" width="24" height="24" viewBox="1.3 1.3 21.4 21.4"><ellipse cx="11" cy="5" rx="9" ry="3" fill="#5b9bd5" stroke="#444"/><path d="M2 5 V19 Q2 22 11 22 Q20 22 20 19 V5 M2 10 Q2 13 11 13 Q20 13 20 10 M2 15 Q2 18 11 18" fill="none" stroke="#444"/><circle cx="18" cy="18" r="5" fill="#5b9bd5" stroke="#444"/><circle cx="18" cy="18" r="2" fill="none" stroke="#fff"/></svg>
<svg class="a" style="left:4px;top:738px" width="24" height="24" viewBox="1.3 1.3 21.4 21.4"><path d="M1 22 H23" stroke="#555" stroke-width="1.2"/><rect x="3" y="8" width="3" height="13" fill="#5b9bd5"/><rect x="8" y="3" width="3" height="18" fill="#f5e36a"/><rect x="13" y="12" width="3" height="9" fill="#5b9bd5"/><rect x="18" y="10" width="3" height="11" fill="#5b9bd5"/></svg>
<svg class="a" style="left:36px;top:738px" width="24" height="24" viewBox="1.3 1.3 21.4 21.4"><path d="M12 4 H3 Q2 4 2 5 V21 Q2 22 3 22 H21 Q22 22 22 21 V15" fill="none" stroke="#555" stroke-width="1.2"/><path d="M10 15 L20 4 L23 7 L13 18 H10Z" fill="#5b9bd5" stroke="#3a7cc4"/></svg>
<svg class="a" style="left:4px;top:770px" width="24" height="24" viewBox="1.3 1.3 21.4 21.4"><rect x="4.5" y="3.5" width="16" height="19" rx="1.5" fill="#5b9bd5" stroke="#555"/><rect x="9" y="1" width="7" height="4" rx="1" fill="#333"/><path d="M8 9 H17 M8 12 H17 M8 15 H17 M8 18 H17" stroke="#fff" stroke-width="0.9"/></svg>
<svg class="a" style="left:36px;top:770px" width="24" height="24" viewBox="1.3 1.3 21.4 21.4"><rect x="1.5" y="1.5" width="21" height="21" rx="1.5" fill="#fafafa" stroke="#555"/><g stroke="#5b9bd5" stroke-width="1.3"><path d="M4 7 H8 M10 7 H14 M16 7 H20 M4 11 H8 M10 11 H14 M16 11 H20 M4 15 H8 M10 15 H14 M16 15 H20"/></g></svg>
<svg class="a" style="left:4px;top:802px" width="24" height="24" viewBox="1.3 1.3 21.4 21.4"><path d="M2 1 V22 H23" fill="none" stroke="#444"/><path d="M3 4 L7 8 L11 6 L15 10 L21 14" fill="none" stroke="#e8392e" stroke-width="1.3"/><path d="M3 18 L8 12 L11 14 L16 9 L22 3" fill="none" stroke="#2c6cb5" stroke-width="1.6"/></svg>
<svg class="a" style="left:36px;top:802px" width="24" height="24" viewBox="1.3 1.3 21.4 21.4"><rect x="1.5" y="1.5" width="21" height="21" fill="#fafafa" stroke="#555"/><circle cx="12" cy="12" r="8" fill="none" stroke="#2c6cb5" stroke-width="3"/><path d="M5 12 H19" stroke="#2c6cb5" stroke-width="2.5"/><rect x="14" y="13" width="8" height="3" fill="#fafafa"/><ellipse cx="12" cy="12" rx="10" ry="7" fill="none" stroke="#f5e36a" stroke-width="1.2" transform="rotate(-35 12 12)"/></svg>
<div class="a" style="left:4px;top:834px;width:11px;height:11px;background:#5b9bd5;"></div>
<div class="a" style="left:7px;top:837px;width:5px;height:5px;background:#f0f0f0;border:1px solid #2f6fb8"></div>
<div class="a" style="left:4px;top:847px;width:11px;height:5px;background:#5b9bd5;"></div>
<div class="a" style="left:7px;top:850px;width:5px;height:2px;background:#f0f0f0;"></div>
<div class="a" style="left:17px;top:834px;width:11px;height:11px;background:#5b9bd5;"></div>
<div class="a" style="left:20px;top:837px;width:5px;height:5px;background:#f0f0f0;border:1px solid #2f6fb8"></div>
<div class="a" style="left:17px;top:847px;width:11px;height:5px;background:#5b9bd5;"></div>
<div class="a" style="left:20px;top:850px;width:5px;height:2px;background:#f0f0f0;"></div>
<div class="a" style="left:0px;top:279px;width:38px;height:42px;border:4.5px solid #f25454;border-radius:3px"></div>
<div class="a" style="left:66px;top:88px;width:1639px;height:748px;background:#0e1f48;"></div>
<div class="a" style="left:66px;top:88px;width:1639px;height:2px;background:#0a1430;"></div>
<div class="a" style="left:66px;top:90px;width:1639px;height:3px;background:#4a8cdc;"></div>
<div class="a" style="left:66px;top:93px;width:1639px;height:50px;background:linear-gradient(90deg,#1d3866 0%,#24447a 86%,#2e5594 91%,#233f72 96%,#1f3a6a 100%)"></div>
<div class="a" style="left:1546px;top:134px;width:159px;height:2px;background:#4f92e4;"></div>
<div class="a" style="left:66px;top:90px;width:7px;height:53px;background:#0b1225;"></div>
<div class="a" style="left:66px;top:145px;width:7px;height:677px;background:#0a1538;"></div>
<div class="a" style="left:66px;top:143px;width:1609px;height:2px;background:#3f7dd0;"></div>
<div class="a" style="left:66px;top:145px;width:1639px;height:43px;background:#030b2f;"></div>
<svg class="a" style="left:1673px;top:142px;" width="32" height="13" viewBox="0 0 32 13"><path d="M1 2 L6 10.5 H32" fill="none" stroke="#3f7dd0" stroke-width="2"/></svg>
<div class="a" style="left:66px;top:188px;width:1639px;height:1px;background:#2a6688;"></div>
<div class="a" style="left:1541px;top:108px;width:164px;height:16px;background:rgba(0,0,0,0.12);"></div>
<div class="t" style="right:227px;top:101.30px;font-size:22px;color:#fff;letter-spacing:-1px">1-2025 14:26:59</div>
<div class="a" style="left:66px;top:814px;width:1639px;height:1px;background:#2f7090;"></div>
<div class="a" style="left:66px;top:815px;width:1639px;height:15px;background:#030b2f;"></div>
<div class="a" style="left:66px;top:830px;width:1639px;height:1px;background:#2f7090;"></div>
<div class="a" style="left:982px;top:832px;width:1px;height:4px;background:#c8d8e8;"></div>
<div class="a" style="left:1162px;top:832px;width:1px;height:4px;background:#c8d8e8;"></div>
<div class="a" style="left:1221px;top:832px;width:1px;height:4px;background:#c8d8e8;"></div>
<div class="a" style="left:1282px;top:832px;width:1px;height:4px;background:#c8d8e8;"></div>
<div class="a" style="left:1362px;top:832px;width:1px;height:4px;background:#c8d8e8;"></div>
<div class="a" style="left:1462px;top:832px;width:1px;height:4px;background:#c8d8e8;"></div>
<div class="a" style="left:1541px;top:832px;width:1px;height:4px;background:#c8d8e8;"></div>
<div class="a" style="left:92px;top:822px;width:1px;height:14px;background:#3a6a90;"></div>
<div class="a" style="left:180px;top:822px;width:1px;height:14px;background:#3a6a90;"></div>
<div class="a" style="left:267px;top:822px;width:1px;height:14px;background:#3a6a90;"></div>
<div class="a" style="left:353px;top:822px;width:1px;height:14px;background:#3a6a90;"></div>
<div class="a" style="left:439px;top:822px;width:1px;height:14px;background:#3a6a90;"></div>
<div class="a" style="left:524px;top:822px;width:1px;height:14px;background:#3a6a90;"></div>
<div class="a" style="left:92px;top:834px;width:440px;height:1px;background:#3a6a90;"></div>
<div class="a" style="left:96px;top:834px;width:20px;height:2px;background:#20c0d0;"></div>
<div class="a" style="left:543px;top:830px;width:1px;height:6px;background:#2f7090;"></div>
<div class="a" style="left:552px;top:830px;width:6px;height:2px;background:#40d0e0;"></div>
<div class="a" style="left:552px;top:830px;width:2px;height:4px;background:#40d0e0;"></div>
<div class="a" style="left:601px;top:833px;width:1px;height:3px;background:#c8d8e8;"></div>
<div class="a" style="left:801px;top:833px;width:1px;height:3px;background:#c8d8e8;"></div>
<div class="a" style="left:1087px;top:315px;width:300px;height:480px;background:#c9cfd3;border:1px solid #222;border-top-color:#aab;border-left-color:#aab"></div>
<div class="a" style="left:1307px;top:315px;width:6px;height:475px;background:#0000ff;"></div>
<svg class="a" style="left:1300px;top:255px;" width="220" height="62" viewBox="0 0 220 62"><defs><linearGradient id="ph" gradientUnits="userSpaceOnUse" x1="0" y1="2.5" x2="0" y2="18"><stop offset="0" stop-color="#000"/><stop offset="0.1" stop-color="#222"/><stop offset="0.25" stop-color="#777"/><stop offset="0.48" stop-color="#e0e0e0"/><stop offset="0.55" stop-color="#f4f4f4"/><stop offset="0.78" stop-color="#999"/><stop offset="0.92" stop-color="#222"/><stop offset="1" stop-color="#000"/></linearGradient><linearGradient id="pv" gradientUnits="userSpaceOnUse" x1="2.5" y1="0" x2="18" y2="0"><stop offset="0" stop-color="#000"/><stop offset="0.1" stop-color="#222"/><stop offset="0.25" stop-color="#777"/><stop offset="0.48" stop-color="#e0e0e0"/><stop offset="0.55" stop-color="#f4f4f4"/><stop offset="0.78" stop-color="#999"/><stop offset="0.92" stop-color="#222"/><stop offset="1" stop-color="#000"/></linearGradient><clipPath id="pc"><path d="M2.5 61 V12 Q2.5 2.5 12 2.5 H220 V61Z"/></clipPath></defs><g clip-path="url(#pc)"><path d="M2.5 2.5 H216 V18 H18Z" fill="url(#ph)"/><path d="M2.5 2.5 L18 18 V61 H2.5Z" fill="url(#pv)"/></g></svg>
<svg class="a" style="left:1437px;top:228px;" width="36" height="52" viewBox="0 0 36 52"><path d="M1 17 A16 16.5 0 0 1 33 17Z" fill="#0000e8" stroke="#111" stroke-width="1"/><rect x="13" y="16.5" width="10" height="13" fill="#808080" stroke="#333" stroke-width="0.6"/><rect x="0.5" y="23" width="7.5" height="28" rx="1.2" fill="#7a7a7a" stroke="#222"/><rect x="28" y="23" width="7.5" height="28" rx="1.2" fill="#7a7a7a" stroke="#222"/><rect x="8" y="29.5" width="20" height="15" fill="#00ee00" stroke="#222" stroke-width="0.6"/></svg>
<div class="a" style="left:966px;top:782px;width:121px;height:15px;background:linear-gradient(180deg,#000 0%,#222 10%,#777 25%,#e0e0e0 48%,#f4f4f4 55%,#999 78%,#222 92%,#000 100%)"></div>
<svg class="a" style="left:999px;top:752px;" width="36" height="52" viewBox="0 0 36 52"><path d="M1 17 A16 16.5 0 0 1 33 17Z" fill="#ff0000" stroke="#111" stroke-width="1"/><rect x="13" y="16.5" width="10" height="13" fill="#808080" stroke="#333" stroke-width="0.6"/><rect x="0.5" y="23" width="7.5" height="28" rx="1.2" fill="#7a7a7a" stroke="#222"/><rect x="28" y="23" width="7.5" height="28" rx="1.2" fill="#7a7a7a" stroke="#222"/><rect x="8" y="29.5" width="20" height="15" fill="#00ee00" stroke="#222" stroke-width="0.6"/></svg>
<div class="a" style="left:1131px;top:304px;width:5px;height:487px;background:linear-gradient(90deg,#888,#ddd 50%,#888);border:1px solid #151515;border-radius:0 0 2px 2px"></div>
<svg class="a" style="left:1120px;top:240px;" width="26" height="66" viewBox="0 0 26 66"><defs><linearGradient id="lmg"><stop offset="0" stop-color="#1d4a78"/><stop offset="0.3" stop-color="#4a64c0"/><stop offset="0.62" stop-color="#8c8cff"/><stop offset="1" stop-color="#24407a"/></linearGradient><linearGradient id="lmm"><stop offset="0" stop-color="#333"/><stop offset="0.5" stop-color="#f0f0f0"/><stop offset="1" stop-color="#333"/></linearGradient><linearGradient id="lmc" x1="0" y1="0" x2="0" y2="1"><stop offset="0" stop-color="#555"/><stop offset="0.7" stop-color="#999"/><stop offset="0.85" stop-color="#eee"/><stop offset="1" stop-color="#777"/></linearGradient></defs><rect x="2" y="2" width="23" height="10" fill="url(#lmc)" stroke="#111" stroke-width="0.8"/><rect x="4" y="3" width="3" height="6" fill="#ddd"/><rect x="12" y="3" width="3" height="6" fill="#ddd"/><rect x="20" y="3" width="3" height="6" fill="#ddd"/><rect x="2" y="12" width="23" height="24" fill="url(#lmg)" stroke="#0a1a2a" stroke-width="0.8"/><circle cx="7" cy="17.5" r="2.6" fill="#333" stroke="#fff" stroke-width="0.9"/><rect x="11" y="21" width="5" height="6.5" fill="#e00" stroke="#222" stroke-width="0.7"/><rect x="6" y="37" width="15" height="6" rx="1.5" fill="url(#lmm)" stroke="#111" stroke-width="0.6"/><rect x="9" y="43" width="9" height="4" fill="url(#lmm)" stroke="#111" stroke-width="0.6"/><rect x="10" y="47" width="7" height="7" fill="url(#lmm)" stroke="#111" stroke-width="0.6"/><rect x="9" y="54" width="9" height="6" rx="1" fill="url(#lmm)" stroke="#111" stroke-width="0.6"/><rect x="10" y="60" width="7" height="5" fill="url(#lmm)" stroke="#111" stroke-width="0.6"/></svg>
<div class="a" style="left:1004px;top:249px;width:9px;height:9px;background:#fff;border:1px solid #15156a"></div>
<div class="a" style="left:1004px;top:274px;width:9px;height:9px;background:#fff;border:1px solid #15156a"></div>
<div class="a" style="left:1004px;top:302px;width:9px;height:9px;background:#fff;border:1px solid #15156a"></div>
<div class="a" style="left:1058px;top:249px;width:9px;height:9px;background:#fff;border:1px solid #15156a"></div>
<div class="a" style="left:1058px;top:302px;width:9px;height:9px;background:#fff;border:1px solid #15156a"></div>
<div class="a" style="left:1111px;top:249px;width:9px;height:9px;background:#fff;border:1px solid #15156a"></div>
<div class="a" style="left:1111px;top:274px;width:9px;height:9px;background:#fff;border:1px solid #15156a"></div>
<div class="a" style="left:1111px;top:302px;width:9px;height:9px;background:#fff;border:1px solid #15156a"></div>
<div class="t" style="left:1014px;top:259.78px;font-size:18.5px;color:#fff;">levelmeter1</div>
<div class="t" style="left:1014px;top:281.28px;font-size:18.5px;color:#fff;letter-spacing:-1.2px">???.???</div>
<div class="t" style="right:327px;top:218.28px;font-size:18.5px;color:#fff;">fillvalue1</div>
<div class="t" style="left:1520px;top:239.28px;font-size:18.5px;color:#fff;letter-spacing:-1.2px">???.???</div>
<div class="t" style="right:843px;top:694.28px;font-size:18.5px;color:#fff;">dischargevalue1</div>
<div class="t" style="right:917px;top:716.28px;font-size:18.5px;color:#fff;letter-spacing:-1.2px">???.???</div>
<div class="a" style="left:1705px;top:88px;width:17px;height:748px;background:#f0f0f0;"></div>
<div class="a" style="left:1706px;top:105px;width:15px;height:555px;background:#cdcdcd;"></div>
<svg class="a" style="left:1708px;top:93px;" width="11" height="8" viewBox="0 0 11 8"><path d="M1.5 6.5 L5.5 2.5 L9.5 6.5" fill="none" stroke="#606060" stroke-width="1.6"/></svg>
<svg class="a" style="left:1708px;top:823px;" width="11" height="8" viewBox="0 0 11 8"><path d="M1.5 1.5 L5.5 5.5 L9.5 1.5" fill="none" stroke="#606060" stroke-width="1.6"/></svg>
<div class="a" style="left:66px;top:836px;width:1656px;height:17px;background:#f0f0f0;"></div>
<div class="a" style="left:83px;top:837px;width:1370px;height:15px;background:#cdcdcd;"></div>
<svg class="a" style="left:71px;top:839px;" width="8" height="11" viewBox="0 0 8 11"><path d="M6 1.5 L2 5.5 L6 9.5" fill="none" stroke="#606060" stroke-width="1.6"/></svg>
<svg class="a" style="left:1693px;top:839px;" width="8" height="11" viewBox="0 0 8 11"><path d="M2 1.5 L6 5.5 L2 9.5" fill="none" stroke="#606060" stroke-width="1.6"/></svg>
<div class="a" style="left:1722px;top:88px;width:197px;height:765px;background:#f0f0f0;"></div>
<div class="a" style="left:1722px;top:88px;width:1px;height:765px;background:#fff;"></div>
<div class="a" style="left:1723px;top:88px;width:1px;height:765px;background:#c8c8c8;"></div>
<div class="a" style="left:1727px;top:89px;width:175px;height:13px;background:linear-gradient(90deg,#c2d3e5,#d6e3f1)"></div>
<div class="t" style="left:1730px;top:89.89px;font-size:11.3px;color:#000;">Properties</div>
<svg class="a" style="left:1905px;top:91px;" width="9" height="9" viewBox="0 0 9 9"><path d="M1 1 L8 8 M8 1 L1 8" stroke="#000" stroke-width="1.8"/></svg>
<div class="a" style="left:1727px;top:104px;width:189px;height:22px;background:#fff;border:1px solid #6a6a6a;border-right-color:#dcdcdc;border-bottom-color:#dcdcdc;box-shadow:inset 1px 1px 0 #a0a0a0"><div class="dd" style="width:18px"></div></div>
<div class="t" style="left:1731.5px;top:108.61px;font-size:13.4px;color:#000;font-weight:bold">DataLink2</div>
<div class="a" style="left:1727px;top:127px;width:189px;height:338px;background:#fff;border:1px solid #6a6a6a;border-right-color:#dcdcdc;border-bottom-color:#dcdcdc;box-shadow:inset 1px 1px 0 #a0a0a0"></div>
<div class="a" style="left:1729px;top:144px;width:186px;height:1px;background:#e6e6e6;"></div>
<div class="t" style="left:1732.5px;top:132.92px;font-size:10.1px;color:#000;">[Name]</div>
<div class="t" style="left:1822px;top:132.92px;font-size:10.1px;color:#000;">DataLink2</div>
<div class="a" style="left:1729px;top:161px;width:186px;height:1px;background:#e6e6e6;"></div>
<div class="t" style="left:1732.5px;top:149.92px;font-size:10.1px;color:#000;">Left Borderline</div>
<div class="t" style="left:1822px;top:149.92px;font-size:10.1px;color:#000;">947</div>
<div class="a" style="left:1729px;top:178px;width:186px;height:1px;background:#e6e6e6;"></div>
<div class="t" style="left:1732.5px;top:166.92px;font-size:10.1px;color:#000;">Right Borderline</div>
<div class="t" style="left:1822px;top:166.92px;font-size:10.1px;color:#000;">1045</div>
<div class="a" style="left:1729px;top:195px;width:186px;height:1px;background:#e6e6e6;"></div>
<div class="t" style="left:1732.5px;top:183.92px;font-size:10.1px;color:#000;">Upper Borderline</div>
<div class="t" style="left:1822px;top:183.92px;font-size:10.1px;color:#000;">169</div>
<div class="a" style="left:1729px;top:212px;width:186px;height:1px;background:#e6e6e6;"></div>
<div class="t" style="left:1732.5px;top:200.92px;font-size:10.1px;color:#000;">Down Borderline</div>
<div class="t" style="left:1822px;top:200.92px;font-size:10.1px;color:#000;">214</div>
<div class="a" style="left:1729px;top:229px;width:186px;height:1px;background:#e6e6e6;"></div>
<div class="t" style="left:1732.5px;top:217.92px;font-size:10.1px;color:#000;">Height</div>
<div class="t" style="left:1822px;top:217.92px;font-size:10.1px;color:#000;">45</div>
<div class="a" style="left:1729px;top:246px;width:186px;height:1px;background:#e6e6e6;"></div>
<div class="t" style="left:1732.5px;top:234.92px;font-size:10.1px;color:#000;">Width</div>
<div class="t" style="left:1822px;top:234.92px;font-size:10.1px;color:#000;">98</div>
<div class="a" style="left:1729px;top:263px;width:186px;height:1px;background:#e6e6e6;"></div>
<div class="t" style="left:1732.5px;top:251.92px;font-size:10.1px;color:#000;">Font</div>
<div class="t" style="left:1822px;top:251.92px;font-size:10.1px;color:#000;">Tahoma</div>
<div class="a" style="left:1729px;top:280px;width:186px;height:1px;background:#e6e6e6;"></div>
<div class="t" style="left:1732.5px;top:268.92px;font-size:10.1px;color:#000;">Text Color</div>
<div class="a" style="left:1822px;top:266px;width:14px;height:13px;background:#fff;border:1px solid #000"></div>
<div class="t" style="left:1846px;top:267.92px;font-size:10.1px;color:#000;">255,255,255</div>
<div class="a" style="left:1729px;top:297px;width:186px;height:1px;background:#e6e6e6;"></div>
<div class="t" style="left:1732.5px;top:285.92px;font-size:10.1px;color:#000;">Background Color</div>
<div class="a" style="left:1822px;top:283px;width:14px;height:13px;background:#fff;border:1px solid #000"></div>
<div class="t" style="left:1846px;top:284.92px;font-size:10.1px;color:#000;">255,255,255</div>
<div class="a" style="left:1729px;top:314px;width:186px;height:1px;background:#e6e6e6;"></div>
<div class="t" style="left:1732.5px;top:302.92px;font-size:10.1px;color:#000;">Edge Color</div>
<div class="a" style="left:1822px;top:300px;width:14px;height:13px;background:#000;border:1px solid #000"></div>
<div class="t" style="left:1846px;top:301.92px;font-size:10.1px;color:#000;">0,0,0</div>
<div class="a" style="left:1729px;top:331px;width:186px;height:1px;background:#e6e6e6;"></div>
<div class="t" style="left:1732.5px;top:319.92px;font-size:10.1px;color:#000;">Frame Style</div>
<div class="t" style="left:1822px;top:319.92px;font-size:10.1px;color:#000;">0 - fsBORD_NULL</div>
<div class="a" style="left:1729px;top:348px;width:186px;height:1px;background:#e6e6e6;"></div>
<div class="t" style="left:1732.5px;top:336.92px;font-size:10.1px;color:#000;">Transparency</div>
<div class="t" style="left:1822px;top:336.92px;font-size:10.1px;color:#000;">Yes</div>
<div class="a" style="left:1729px;top:365px;width:186px;height:1px;background:#e6e6e6;"></div>
<div class="t" style="left:1732.5px;top:353.92px;font-size:10.1px;color:#000;">Layer</div>
<div class="t" style="left:1822px;top:353.92px;font-size:10.1px;color:#000;">0</div>
<div class="a" style="left:1729px;top:382px;width:186px;height:1px;background:#e6e6e6;"></div>
<div class="t" style="left:1732.5px;top:370.92px;font-size:10.1px;color:#000;">Visible</div>
<div class="t" style="left:1822px;top:370.92px;font-size:10.1px;color:#000;">Yes</div>
<div class="a" style="left:1729px;top:399px;width:186px;height:1px;background:#e6e6e6;"></div>
<div class="t" style="left:1732.5px;top:387.92px;font-size:10.1px;color:#000;">Tag</div>
<div class="t" style="left:1822px;top:387.92px;font-size:10.1px;color:#000;">levelmeter1</div>
<div class="a" style="left:1729px;top:416px;width:186px;height:1px;background:#e6e6e6;"></div>
<div class="t" style="left:1732.5px;top:404.92px;font-size:10.1px;color:#000;">Valid</div>
<div class="t" style="left:1822px;top:404.92px;font-size:10.1px;color:#000;">Yes</div>
<div class="a" style="left:1819px;top:128px;width:1px;height:289px;background:#e6e6e6;"></div>
<div class="a" style="left:1722px;top:467px;width:197px;height:1px;background:#c8c8c8;"></div>
<div class="a" style="left:1722px;top:468px;width:197px;height:1px;background:#fff;"></div>
<div class="a" style="left:1727px;top:472px;width:175px;height:13px;background:linear-gradient(90deg,#c2d3e5,#d6e3f1)"></div>
<div class="t" style="left:1729.5px;top:473.39px;font-size:11.3px;color:#000;">Diagram Layer</div>
<svg class="a" style="left:1905px;top:474px;" width="9" height="9" viewBox="0 0 9 9"><path d="M1 1 L8 8 M8 1 L1 8" stroke="#000" stroke-width="1.8"/></svg>
<div class="a" style="left:1727px;top:486px;width:190px;height:364px;background:#f0f0f0;border:1px solid #6a6a6a;border-right-color:#dcdcdc;border-bottom-color:#dcdcdc;box-shadow:inset 1px 1px 0 #a0a0a0, inset -1px -1px 0 #fff"></div>
<div class="a" style="left:1791px;top:491px;width:123px;height:35px;background:#000;"></div>
<div class="t" style="left:1810px;top:503.80px;font-size:12px;color:#fff;">Layer 0</div>
<div class="a" style="left:1730px;top:526px;width:61px;height:1px;background:#a0a0a0;"></div>
<div class="a" style="left:1760px;top:493px;width:1px;height:30px;background:#a0a0a0;"></div>
<div class="a" style="left:1736px;top:500px;width:19px;height:17px;background:#f0f0f0;border-top:1px solid #888;border-left:1px solid #888;border-right:1px solid #fff;border-bottom:1px solid #fff"></div>
<svg class="a" style="left:1738px;top:503px;" width="14" height="11" viewBox="0 0 14 11"><ellipse cx="7" cy="5.5" rx="6" ry="4" fill="#ccc" stroke="#222" stroke-width="1.2"/><ellipse cx="7" cy="5.5" rx="3.6" ry="3" fill="#111"/><circle cx="6" cy="4.8" r="0.9" fill="#fff"/></svg>
<div class="a" style="left:1766px;top:500px;width:19px;height:17px;background:#f0f0f0;border-top:1px solid #888;border-left:1px solid #888;border-right:1px solid #fff;border-bottom:1px solid #fff"></div>
<svg class="a" style="left:1768px;top:501px;" width="14" height="14" viewBox="0 0 14 14"><path d="M2 12 Q3 9 9 3 L11 5 Q6 10 2 12Z" fill="#ccc" stroke="#333" stroke-width="0.8"/><path d="M9 3 L12 1" stroke="#333"/></svg>
<div class="t" style="left:1810px;top:539.80px;font-size:12px;color:#000;">Layer 1</div>
<div class="a" style="left:1730px;top:562px;width:61px;height:1px;background:#a0a0a0;"></div>
<div class="a" style="left:1760px;top:529px;width:1px;height:30px;background:#a0a0a0;"></div>
<div class="a" style="left:1736px;top:536px;width:19px;height:17px;background:#f0f0f0;border-top:1px solid #888;border-left:1px solid #888;border-right:1px solid #fff;border-bottom:1px solid #fff"></div>
<svg class="a" style="left:1738px;top:539px;" width="14" height="11" viewBox="0 0 14 11"><ellipse cx="7" cy="5.5" rx="6" ry="4" fill="#ccc" stroke="#222" stroke-width="1.2"/><ellipse cx="7" cy="5.5" rx="3.6" ry="3" fill="#111"/><circle cx="6" cy="4.8" r="0.9" fill="#fff"/></svg>
<div class="a" style="left:1766px;top:536px;width:19px;height:17px;background:#f0f0f0;border-top:1px solid #888;border-left:1px solid #888;border-right:1px solid #fff;border-bottom:1px solid #fff"></div>
<div class="t" style="left:1810px;top:575.80px;font-size:12px;color:#000;">Layer 2</div>
<div class="a" style="left:1730px;top:598px;width:61px;height:1px;background:#a0a0a0;"></div>
<div class="a" style="left:1760px;top:565px;width:1px;height:30px;background:#a0a0a0;"></div>
<div class="a" style="left:1736px;top:572px;width:19px;height:17px;background:#f0f0f0;border-top:1px solid #888;border-left:1px solid #888;border-right:1px solid #fff;border-bottom:1px solid #fff"></div>
<svg class="a" style="left:1738px;top:575px;" width="14" height="11" viewBox="0 0 14 11"><ellipse cx="7" cy="5.5" rx="6" ry="4" fill="#ccc" stroke="#222" stroke-width="1.2"/><ellipse cx="7" cy="5.5" rx="3.6" ry="3" fill="#111"/><circle cx="6" cy="4.8" r="0.9" fill="#fff"/></svg>
<div class="a" style="left:1766px;top:572px;width:19px;height:17px;background:#f0f0f0;border-top:1px solid #888;border-left:1px solid #888;border-right:1px solid #fff;border-bottom:1px solid #fff"></div>
<div class="t" style="left:1810px;top:611.80px;font-size:12px;color:#000;">Layer 3</div>
<div class="a" style="left:1730px;top:634px;width:61px;height:1px;background:#a0a0a0;"></div>
<div class="a" style="left:1760px;top:601px;width:1px;height:30px;background:#a0a0a0;"></div>
<div class="a" style="left:1736px;top:608px;width:19px;height:17px;background:#f0f0f0;border-top:1px solid #888;border-left:1px solid #888;border-right:1px solid #fff;border-bottom:1px solid #fff"></div>
<svg class="a" style="left:1738px;top:611px;" width="14" height="11" viewBox="0 0 14 11"><ellipse cx="7" cy="5.5" rx="6" ry="4" fill="#ccc" stroke="#222" stroke-width="1.2"/><ellipse cx="7" cy="5.5" rx="3.6" ry="3" fill="#111"/><circle cx="6" cy="4.8" r="0.9" fill="#fff"/></svg>
<div class="a" style="left:1766px;top:608px;width:19px;height:17px;background:#f0f0f0;border-top:1px solid #888;border-left:1px solid #888;border-right:1px solid #fff;border-bottom:1px solid #fff"></div>
<div class="a" style="left:1790px;top:491px;width:1px;height:143px;background:#a0a0a0;"></div>
<div class="a" style="left:1791px;top:633px;width:123px;height:1px;background:#000;"></div>
<div class="a" style="left:0px;top:853px;width:1919px;height:27px;background:#fff;"></div>
<div class="a" style="left:0px;top:853px;width:235px;height:26px;background:#f0f0f0;"></div>
<div class="a" style="left:237px;top:853px;width:265px;height:26px;background:#f0f0f0;"></div>
<div class="a" style="left:503px;top:853px;width:445px;height:26px;background:#f0f0f0;"></div>
<div class="a" style="left:0px;top:878px;width:948px;height:1px;background:#c0c0c0;"></div>
<div class="a" style="left:11px;top:857px;width:19px;height:19px;background:#000;"></div>
<div class="a" style="left:15px;top:861px;width:11px;height:11px;background:#0000ff;"></div>
<div class="a" style="left:36px;top:856px;width:1px;height:21px;background:#c8c8c8;"></div>
<div class="a" style="left:48px;top:855px;width:177px;height:23px;background:#000;"></div>
<div class="a" style="left:49px;top:856px;width:10px;height:10px;background:#ffffff;"></div>
<div class="a" style="left:60px;top:856px;width:10px;height:10px;background:#c8d0d4;"></div>
<div class="a" style="left:71px;top:856px;width:10px;height:10px;background:#ffc0c0;"></div>
<div class="a" style="left:82px;top:856px;width:10px;height:10px;background:#ff0000;"></div>
<div class="a" style="left:93px;top:856px;width:10px;height:10px;background:#ffe0c0;"></div>
<div class="a" style="left:104px;top:856px;width:10px;height:10px;background:#ff8000;"></div>
<div class="a" style="left:115px;top:856px;width:10px;height:10px;background:#ffffc0;"></div>
<div class="a" style="left:126px;top:856px;width:10px;height:10px;background:#ffff00;"></div>
<div class="a" style="left:137px;top:856px;width:10px;height:10px;background:#c0ffc0;"></div>
<div class="a" style="left:148px;top:856px;width:10px;height:10px;background:#00ff00;"></div>
<div class="a" style="left:159px;top:856px;width:10px;height:10px;background:#c0ffff;"></div>
<div class="a" style="left:170px;top:856px;width:10px;height:10px;background:#00ffff;"></div>
<div class="a" style="left:181px;top:856px;width:10px;height:10px;background:#c0c0ff;"></div>
<div class="a" style="left:192px;top:856px;width:10px;height:10px;background:#0000ff;"></div>
<div class="a" style="left:203px;top:856px;width:10px;height:10px;background:#ffc0ff;"></div>
<div class="a" style="left:214px;top:856px;width:10px;height:10px;background:#ff00ff;"></div>
<div class="a" style="left:49px;top:867px;width:10px;height:10px;background:#000000;"></div>
<div class="a" style="left:60px;top:867px;width:10px;height:10px;background:#808080;"></div>
<div class="a" style="left:71px;top:867px;width:10px;height:10px;background:#ff8080;"></div>
<div class="a" style="left:82px;top:867px;width:10px;height:10px;background:#c00000;"></div>
<div class="a" style="left:93px;top:867px;width:10px;height:10px;background:#ffc080;"></div>
<div class="a" style="left:104px;top:867px;width:10px;height:10px;background:#c04000;"></div>
<div class="a" style="left:115px;top:867px;width:10px;height:10px;background:#ffff80;"></div>
<div class="a" style="left:126px;top:867px;width:10px;height:10px;background:#c0c000;"></div>
<div class="a" style="left:137px;top:867px;width:10px;height:10px;background:#80ff80;"></div>
<div class="a" style="left:148px;top:867px;width:10px;height:10px;background:#00c000;"></div>
<div class="a" style="left:159px;top:867px;width:10px;height:10px;background:#80ffff;"></div>
<div class="a" style="left:170px;top:867px;width:10px;height:10px;background:#00c0c0;"></div>
<div class="a" style="left:181px;top:867px;width:10px;height:10px;background:#8080ff;"></div>
<div class="a" style="left:192px;top:867px;width:10px;height:10px;background:#0000c0;"></div>
<div class="a" style="left:203px;top:867px;width:10px;height:10px;background:#ff80ff;"></div>
<div class="a" style="left:214px;top:867px;width:10px;height:10px;background:#c000c0;"></div>
<div class="a" style="left:241px;top:857px;width:2px;height:2px;background:#b8b8b8;"></div>
<div class="a" style="left:241px;top:862px;width:2px;height:2px;background:#b8b8b8;"></div>
<div class="a" style="left:241px;top:867px;width:2px;height:2px;background:#b8b8b8;"></div>
<div class="a" style="left:241px;top:872px;width:2px;height:2px;background:#b8b8b8;"></div>
<div class="a" style="left:507px;top:857px;width:2px;height:2px;background:#b8b8b8;"></div>
<div class="a" style="left:507px;top:862px;width:2px;height:2px;background:#b8b8b8;"></div>
<div class="a" style="left:507px;top:867px;width:2px;height:2px;background:#b8b8b8;"></div>
<div class="a" style="left:507px;top:872px;width:2px;height:2px;background:#b8b8b8;"></div>
<div class="a" style="left:237px;top:853px;width:1px;height:26px;background:#c8c8c8;"></div>
<div class="a" style="left:503px;top:853px;width:1px;height:26px;background:#c8c8c8;"></div>
<svg class="a" style="left:250px;top:857px;" width="16" height="16" viewBox="0 0 16 16"><rect x="1" y="2" width="14" height="12" fill="#f0f0f0" stroke="#333" stroke-width="1.3"/></svg>
<div class="a" style="left:270px;top:854px;width:22px;height:23px;background:#f8f8f8;border:1px solid #d0d0d0"></div>
<div class="a" style="left:281px;top:858px;width:2px;height:14px;background:#555;"></div>
<svg class="a" style="left:302px;top:857px;" width="6" height="16" viewBox="0 0 6 16"><path d="M3 0 V16" stroke="#666" stroke-width="2" stroke-dasharray="3 1"/></svg>
<svg class="a" style="left:325px;top:857px;" width="6" height="16" viewBox="0 0 6 16"><path d="M3 0 V16" stroke="#666" stroke-width="2" stroke-dasharray="2 1"/></svg>
<svg class="a" style="left:348px;top:857px;" width="6" height="16" viewBox="0 0 6 16"><path d="M3 0 V16" stroke="#666" stroke-width="2" stroke-dasharray="2 1 1 1"/></svg>
<svg class="a" style="left:371px;top:857px;" width="6" height="16" viewBox="0 0 6 16"><path d="M3 0 V16" stroke="#666" stroke-width="2" stroke-dasharray="1 1"/></svg>
<div class="a" style="left:390px;top:864px;width:13px;height:2px;background:#333;"></div>
<div class="a" style="left:413px;top:864px;width:13px;height:3px;background:#333;"></div>
<div class="a" style="left:436px;top:863px;width:13px;height:4px;background:#333;"></div>
<div class="a" style="left:459px;top:863px;width:13px;height:4px;background:#333;"></div>
<div class="a" style="left:482px;top:863px;width:13px;height:5px;background:#333;"></div>
<svg class="a" style="left:512px;top:857px;" width="16" height="16" viewBox="0 0 16 16"><rect x="0" y="0" width="16" height="16" fill="#0a7ad8" stroke="#333" stroke-width="1"/></svg>
<svg class="a" style="left:535px;top:857px;" width="16" height="16" viewBox="0 0 16 16"><rect x="0.5" y="0.5" width="15" height="15" fill="#f0f0f0" stroke="#333"/></svg>
<svg class="a" style="left:558px;top:857px;" width="16" height="16" viewBox="0 0 16 16"><rect x="0.5" y="0.5" width="15" height="15" fill="#f0f0f0" stroke="#333"/><path d="M0 8 L8 0 M0 16 L16 0 M8 16 L16 8" stroke="#333"/></svg>
<svg class="a" style="left:581px;top:857px;" width="16" height="16" viewBox="0 0 16 16"><rect x="0.5" y="0.5" width="15" height="15" fill="#f0f0f0" stroke="#333"/><path d="M0 5.5 H16 M0 10.5 H16 M5.5 0 V16 M10.5 0 V16" stroke="#333"/></svg>
<svg class="a" style="left:604px;top:857px;" width="16" height="16" viewBox="0 0 16 16"><rect x="0.5" y="0.5" width="15" height="15" fill="#f0f0f0" stroke="#333"/><path d="M0 8 L8 0 M0 16 L16 0 M8 16 L16 8 M0 8 L8 16 M0 0 L16 16 M8 0 L16 8" stroke="#333"/></svg>
<svg class="a" style="left:627px;top:857px;" width="16" height="16" viewBox="0 0 16 16"><rect x="0.5" y="0.5" width="15" height="15" fill="#f0f0f0" stroke="#333"/><path d="M0 8 L8 16 M0 0 L16 16 M8 0 L16 8" stroke="#333"/></svg>
<svg class="a" style="left:650px;top:857px;" width="16" height="16" viewBox="0 0 16 16"><rect x="0.5" y="0.5" width="15" height="15" fill="#f0f0f0" stroke="#333"/><path d="M0 5.5 H16 M0 10.5 H16" stroke="#333"/></svg>
<svg class="a" style="left:673px;top:857px;" width="16" height="16" viewBox="0 0 16 16"><rect x="0.5" y="0.5" width="15" height="15" fill="#f0f0f0" stroke="#333"/><path d="M5.5 0 V16 M10.5 0 V16" stroke="#333"/></svg>
<div class="a" style="left:696px;top:857px;width:16px;height:16px;background:linear-gradient(90deg,#0a6ad0,#d8eafa);border:1px solid #333"></div>
<div class="a" style="left:719px;top:857px;width:16px;height:16px;background:linear-gradient(90deg,#d8eafa,#0a6ad0);border:1px solid #333"></div>
<div class="a" style="left:742px;top:857px;width:16px;height:16px;background:linear-gradient(90deg,#0a6ad0,#d8eafa 50%,#0a6ad0);border:1px solid #333"></div>
<div class="a" style="left:765px;top:857px;width:16px;height:16px;background:linear-gradient(180deg,#0a6ad0,#d8eafa 50%,#0a6ad0);border:1px solid #333"></div>
<div class="a" style="left:788px;top:857px;width:16px;height:16px;background:linear-gradient(135deg,#d8eafa,#0a6ad0);border:1px solid #333"></div>
<div class="a" style="left:811px;top:857px;width:16px;height:16px;background:linear-gradient(225deg,#d8eafa,#0a6ad0);border:1px solid #333"></div>
<div class="a" style="left:834px;top:857px;width:16px;height:16px;background:linear-gradient(45deg,#d8eafa,#0a6ad0);border:1px solid #333"></div>
<div class="a" style="left:857px;top:857px;width:16px;height:16px;background:linear-gradient(315deg,#d8eafa,#0a6ad0);border:1px solid #333"></div>
<div class="a" style="left:880px;top:857px;width:16px;height:16px;background:linear-gradient(180deg,#d8eafa,#0a6ad0);border:1px solid #333"></div>
<div class="a" style="left:903px;top:857px;width:16px;height:16px;background:linear-gradient(0deg,#d8eafa,#0a6ad0);border:1px solid #333"></div>
<div class="a" style="left:925px;top:855px;width:21px;height:22px;background:#f8f8f8;border:1px solid #d0d0d0"></div>
<div class="a" style="left:927px;top:857px;width:17px;height:17px;border:1px solid #333;background:radial-gradient(#d8eafa,#0a6ad0)"></div>
<div class="a" style="left:0px;top:880px;width:1919px;height:1px;background:#a0a0a0;"></div>
<div class="a" style="left:0px;top:881px;width:1919px;height:20px;background:#f0f0f0;"></div>
<div class="t" style="left:3px;top:885.80px;font-size:12px;color:#000;">Ready</div>
<div class="a" style="left:1575px;top:883px;width:42px;height:18px;background:#f0f0f0;border-left:1px solid #a0a0a0;border-top:1px solid #a0a0a0;border-right:1px solid #fff"></div>
<div class="a" style="left:1620px;top:883px;width:35px;height:18px;background:#f0f0f0;border-left:1px solid #a0a0a0;border-top:1px solid #a0a0a0;border-right:1px solid #fff"></div>
<div class="t" style="left:1623px;top:887.08px;font-size:11.2px;color:#000;-webkit-text-stroke:0">X:947</div>
<div class="a" style="left:1657px;top:883px;width:36px;height:18px;background:#f0f0f0;border-left:1px solid #a0a0a0;border-top:1px solid #a0a0a0;border-right:1px solid #fff"></div>
<div class="t" style="left:1660px;top:887.08px;font-size:11.2px;color:#000;-webkit-text-stroke:0">Y:169</div>
<div class="a" style="left:1696px;top:883px;width:34px;height:18px;background:#f0f0f0;border-left:1px solid #a0a0a0;border-top:1px solid #a0a0a0;border-right:1px solid #fff"></div>
<div class="t" style="left:1699px;top:887.08px;font-size:11.2px;color:#000;-webkit-text-stroke:0">W:98</div>
<div class="a" style="left:1734px;top:883px;width:34px;height:18px;background:#f0f0f0;border-left:1px solid #a0a0a0;border-top:1px solid #a0a0a0;border-right:1px solid #fff"></div>
<div class="t" style="left:1737px;top:887.08px;font-size:11.2px;color:#000;-webkit-text-stroke:0">H:45</div>
<div class="a" style="left:1771px;top:883px;width:46px;height:18px;background:#f0f0f0;border-left:1px solid #a0a0a0;border-top:1px solid #a0a0a0;border-right:1px solid #fff"></div>
<div class="t" style="left:1774px;top:887.08px;font-size:11.2px;color:#000;-webkit-text-stroke:0">Select 1</div>
<div class="a" style="left:1820px;top:883px;width:28px;height:18px;background:#f0f0f0;border-left:1px solid #a0a0a0;border-top:1px solid #a0a0a0;border-right:1px solid #fff"></div>
<div class="a" style="left:1851px;top:883px;width:34px;height:18px;background:#f0f0f0;border-left:1px solid #a0a0a0;border-top:1px solid #a0a0a0;border-right:1px solid #fff"></div>
<div class="t" style="left:1854px;top:887.08px;font-size:11.2px;color:#000;-webkit-text-stroke:0">NUM</div>
<div class="a" style="left:1887px;top:883px;width:32px;height:18px;background:#f0f0f0;border-left:1px solid #a0a0a0;border-top:1px solid #a0a0a0;border-right:1px solid #fff"></div>
<div class="a" style="left:0px;top:901px;width:1919px;height:39px;background:#08080a;"></div>
<svg class="a" style="left:16px;top:912px;" width="16" height="16" viewBox="0 0 16 16"><path d="M0 2.3 L6.5 1.4 V7.5 H0Z M7.5 1.2 L16 0 V7.5 H7.5Z M0 8.5 H6.5 V14.6 L0 13.7Z M7.5 8.5 H16 V16 L7.5 14.8Z" fill="#fff"/></svg>
<svg class="a" style="left:63px;top:911px;" width="18" height="18" viewBox="0 0 18 18"><circle cx="11" cy="7" r="5.5" fill="none" stroke="#fff" stroke-width="1.4"/><path d="M7 11 L1.5 16.5" stroke="#fff" stroke-width="1.6"/></svg>
<svg class="a" style="left:111px;top:912px;" width="18" height="16" viewBox="0 0 18 16"><path d="M1 3 H12 M1 13 H12 M2.5 3 V13 M11 3 V13 M15.5 1 V6 M15.5 8 V15" fill="none" stroke="#fff" stroke-width="1.5"/></svg>
<div class="a" style="left:159px;top:909px;width:24px;height:24px;background:linear-gradient(135deg,#6a9cf8,#1a44b8 85%);border-radius:2px"></div>
<svg class="a" style="left:163px;top:913px;" width="16" height="16" viewBox="0 0 16 16"><path d="M12.5 1.5 Q15 3 14 6 Q12.5 8.5 9.5 7.5 L5 12 Q3.8 13 3 12.2 Q2.2 11.4 3.2 10.4 L7.8 6 Q7 3 9.5 1.6 L9.6 4.6 L11.5 5.2 Z" fill="#fff"/><circle cx="8.5" cy="14" r="1.3" fill="#fff"/></svg>
<div class="a" style="left:208px;top:909px;width:24px;height:24px;background:linear-gradient(135deg,#6a9cf8,#1a44b8 85%);border-radius:2px"></div>
<svg class="a" style="left:212px;top:912px;" width="18" height="18" viewBox="0 0 18 18"><circle cx="7.5" cy="9.5" r="4.2" fill="none" stroke="#fff" stroke-width="2.6"/><path d="M7.5 3.5 V5.5 M7.5 13.5 V15.5 M1.5 9.5 H3.5 M11.5 9.5 H13.5 M3.3 5.3 L4.7 6.7 M10.3 12.3 L11.7 13.7 M3.3 13.7 L4.7 12.3 M10.3 6.7 L11.7 5.3" stroke="#fff" stroke-width="2"/><rect x="10.5" y="1" width="7" height="4" rx="2" fill="#f0d020"/></svg>
<div class="a" style="left:245px;top:901px;width:48px;height:39px;background:#303033;"></div>
<svg class="a" style="left:257px;top:909px;" width="24" height="24" viewBox="0 0 24 24"><rect x="0" y="0" width="24" height="24" fill="#dde9f8"/><rect x="5" y="0" width="2" height="10" fill="#fff"/><rect x="17" y="0" width="4" height="7" fill="#bbb"/><path d="M16 6.5 H22.5 V20 Q22.5 23.5 19.2 23.5 Q16 23.5 16 20Z" fill="#e6e6e6" stroke="#555" stroke-width="1.2"/><ellipse cx="7" cy="9.8" rx="2.4" ry="0.9" fill="#1a80e0"/><path d="M7 10.5 L4.5 14.5 H9.5Z" fill="#888"/><ellipse cx="7" cy="19.8" rx="5.5" ry="4" fill="#1a80e0"/><rect x="1" y="15.5" width="1.5" height="8.5" fill="#555"/><rect x="11.5" y="15.5" width="1.5" height="8.5" fill="#555"/></svg>
<div class="a" style="left:151px;top:938px;width:40px;height:2px;background:#76b9ed;"></div>
<div class="a" style="left:200px;top:938px;width:40px;height:2px;background:#76b9ed;"></div>
<div class="a" style="left:245px;top:938px;width:48px;height:2px;background:#76b9ed;"></div>
<svg class="a" style="left:1638px;top:909px;" width="20" height="20" viewBox="0 0 20 20"><circle cx="13" cy="5" r="3" fill="none" stroke="#fff" stroke-width="1.2"/><path d="M8 13 Q13 8 18 13" fill="none" stroke="#fff" stroke-width="1.2"/><circle cx="6" cy="12" r="3" fill="none" stroke="#fff" stroke-width="1.2"/><path d="M1 19 Q6 14 11 19" fill="none" stroke="#fff" stroke-width="1.2"/></svg>
<svg class="a" style="left:1676px;top:914px;" width="14" height="10" viewBox="0 0 14 10"><path d="M1 8 L7 2 L13 8" fill="none" stroke="#fff" stroke-width="1.3"/></svg>
<svg class="a" style="left:1699px;top:913px;" width="18" height="13" viewBox="0 0 18 13"><rect x="4" y="3" width="13" height="8" fill="none" stroke="#fff" stroke-width="1.2"/><rect x="1" y="2" width="3" height="4" fill="none" stroke="#fff"/></svg>
<svg class="a" style="left:1723px;top:912px;" width="18" height="16" viewBox="0 0 18 16"><rect x="1.5" y="1.5" width="14" height="10" fill="none" stroke="#fff" stroke-width="1.2"/><path d="M11 7 L15 15 H7Z" fill="#f5c518"/></svg>
<svg class="a" style="left:1746px;top:912px;" width="18" height="14" viewBox="0 0 18 14"><path d="M1 5 H4 L8 1 V13 L4 9 H1Z" fill="none" stroke="#fff" stroke-width="1.2"/><path d="M11 4 L16 10 M16 4 L11 10" stroke="#fff" stroke-width="1.2"/></svg>
<div class="t" style="left:1772px;top:915.80px;font-size:12px;color:#fff;">ENG</div>
<div class="t" style="left:1635px;width:400px;text-align:center;top:906.80px;font-size:12px;color:#fff;">14:27</div>
<div class="t" style="left:1635px;width:400px;text-align:center;top:924.80px;font-size:12px;color:#fff;">11/14/2025</div>
<svg class="a" style="left:1878px;top:910px;" width="18" height="18" viewBox="0 0 18 18"><path d="M1.5 1.5 H16.5 V12.5 H10 L7.5 15.5 L6 12.5 H1.5Z" fill="none" stroke="#fff" stroke-width="1.2"/></svg>
<div class="a" style="left:1915px;top:901px;width:1px;height:39px;background:#555;"></div>
<div class="a" style="left:966px;top:88px;width:416px;height:3px;background:#4a8cdc;"></div>
<div class="a" style="left:900px;top:91px;width:641px;height:144px;background:#f0f0f0;border:1px solid #9a9a9a;box-shadow:2px 3px 10px rgba(0,0,0,0.55)"></div>
<div class="a" style="left:901px;top:92px;width:639px;height:24px;background:#fff;"></div>
<div class="t" style="left:948px;top:95.40px;font-size:12px;color:#a0a0a0;">Properties</div>
<svg class="a" style="left:1519px;top:96px;" width="14" height="14" viewBox="0 0 14 14"><path d="M1.5 1.5 L12.5 12.5 M12.5 1.5 L1.5 12.5" stroke="#9a9a9a" stroke-width="1.1"/></svg>
<div class="a" style="left:910px;top:134px;width:515px;height:98px;border:1px solid #dcdcdc;box-shadow:inset 1px 1px 0 #fff, 1px 1px 0 #fff"></div>
<div class="a" style="left:967px;top:128px;width:28px;height:10px;background:#f0f0f0;"></div>
<div class="t" style="left:968px;top:128.65px;font-size:11px;color:#000;">Tag</div>
<div class="t" style="left:978px;top:150.65px;font-size:11px;color:#000;">Data</div>
<div class="sunk" style="left:1037px;top:145px;width:268px;height:22px"></div>
<div class="t" style="left:1040px;top:148.65px;font-size:11px;color:#000;letter-spacing:-0.2px">levelmeter1</div>
<div class="t" style="left:977px;top:179.65px;font-size:11px;color:#000;">Description</div>
<div class="sunk" style="left:1037px;top:175px;width:269px;height:23px;background:#f0f0f0"></div>
<div class="btn" style="left:1307px;top:145px;width:26px;height:23px"><span style="top:5.11px;font-size:11px">...</span></div>
<div class="btn" style="left:1332px;top:145px;width:15px;height:23px"></div>
<svg class="a" style="left:1335px;top:153px;" width="8" height="5" viewBox="0 0 8 5"><path d="M0 0 H8 L4 4.5Z" fill="#000"/></svg>
<div class="cb" style="left:977px;top:209px"></div>
<div class="t" style="left:995px;top:210.65px;font-size:11px;color:#000;letter-spacing:-0.2px">Unit</div>
<div class="cb" style="left:1055px;top:209px"></div>
<svg class="a" style="left:1057px;top:211px;" width="9" height="9" viewBox="0 0 9 9"><path d="M1 4.5 L3.5 7 L8 1.5" fill="none" stroke="#000" stroke-width="1.8"/></svg>
<div class="t" style="left:1073px;top:210.65px;font-size:11px;color:#000;letter-spacing:-0.2px">Name</div>
<div class="cb" style="left:1133px;top:209px"></div>
<svg class="a" style="left:1135px;top:211px;" width="9" height="9" viewBox="0 0 9 9"><path d="M1 4.5 L3.5 7 L8 1.5" fill="none" stroke="#000" stroke-width="1.8"/></svg>
<div class="t" style="left:1151px;top:210.65px;font-size:11px;color:#000;letter-spacing:-0.2px">Real-time Value</div>
<div class="cb" style="left:1262px;top:209px"></div>
<svg class="a" style="left:1264px;top:211px;" width="9" height="9" viewBox="0 0 9 9"><path d="M1 4.5 L3.5 7 L8 1.5" fill="none" stroke="#000" stroke-width="1.8"/></svg>
<div class="t" style="left:1280px;top:210.65px;font-size:11px;color:#000;letter-spacing:-0.2px">Prompts</div>
<div class="cb" style="left:1343px;top:209px"></div>
<div class="t" style="left:1361px;top:210.65px;font-size:11px;color:#000;letter-spacing:-0.2px">Status</div>
<div class="btn" style="left:1436px;top:134px;width:74px;height:26px"><span style="top:6.61px;font-size:11px">OK</span></div>
<div class="btn" style="left:1436px;top:166px;width:74px;height:26px"><span style="top:6.61px;font-size:11px">Cancel</span></div>
<div class="btn" style="left:1436px;top:199px;width:74px;height:26px"><span style="top:6.61px;font-size:11px">Settings</span></div>
<div class="a" style="left:1293px;top:132px;width:51px;height:47px;border:4px solid #f25454;border-radius:3px"></div>
<div class="a" style="left:72px;top:88px;width:895px;height:734px;background:#f0f0f0;border:1px solid #7a7a7a;box-shadow:2px 3px 8px rgba(0,0,0,0.45)"></div>
<div class="a" style="left:73px;top:89px;width:893px;height:24px;background:#fff;"></div>
<div class="t" style="left:76px;top:94.39px;font-size:11.3px;color:#000;">Select Tag</div>
<svg class="a" style="left:944px;top:92px;" width="15" height="15" viewBox="0 0 15 15"><path d="M1.5 1.5 L13.5 13.5 M13.5 1.5 L1.5 13.5" stroke="#000" stroke-width="1.2"/></svg>
<div class="a" style="left:76px;top:140px;width:887px;height:650px;border:1px solid #a0a0a0;border-top-color:#d9d9d9;border-left-color:#fff;box-shadow:inset 1px 1px 0 #fff"></div>
<div class="a" style="left:77px;top:121px;width:82px;height:20px;background:#f0f0f0;border:1px solid #fff;border-right:2px solid #888;border-bottom:none"></div>
<div class="t" style="left:83px;top:124.65px;font-size:11px;color:#000;">Database Tag</div>
<div class="a" style="left:158px;top:123px;width:67px;height:17px;background:#f0f0f0;border-top:1px solid #fff;border-right:2px solid #888"></div>
<div class="t" style="left:162px;top:126.65px;font-size:11px;color:#000;">System Tag</div>
<div class="a" style="left:81px;top:149px;width:872px;height:117px;border:1px solid #a0a0a0;border-right-color:#a0a0a0;box-shadow:inset 1px 1px 0 #fff, 1px 1px 0 #fff"></div>
<div class="a" style="left:87px;top:144px;width:80px;height:10px;background:#f0f0f0;"></div>
<div class="t" style="left:89px;top:144.49px;font-size:10.6px;color:#000;">Filter Conditions</div>
<div class="t" style="left:87.5px;top:165.36px;font-size:10.75px;color:#000;">SubProject:</div>
<div class="sunk" style="left:166px;top:161px;width:194px;height:20px"><div class="dd"></div></div>
<div class="t" style="left:169px;top:166.15px;font-size:11px;color:#000;">OA0(SubProject0)</div>
<div class="t" style="left:87.5px;top:202.36px;font-size:10.75px;color:#000;">Tag Grouping:</div>
<div class="sunk" style="left:166px;top:198px;width:194px;height:20px"><div class="dd"></div></div>
<div class="t" style="left:169px;top:203.15px;font-size:11px;color:#000;">All</div>
<div class="t" style="left:87.5px;top:238.36px;font-size:10.75px;color:#000;">Tag Type:</div>
<div class="sunk" style="left:166px;top:234px;width:194px;height:20px"><div class="dd"></div></div>
<div class="t" style="left:169px;top:239.15px;font-size:11px;color:#000;">ALL</div>
<div class="t" style="left:389.5px;top:165.36px;font-size:10.75px;color:#000;">Search Range:</div>
<div class="sunk" style="left:474px;top:161px;width:178px;height:20px"><div class="dd"></div></div>
<div class="t" style="left:478px;top:166.15px;font-size:11px;color:#000;">All</div>
<div class="t" style="left:389.5px;top:202.36px;font-size:10.75px;color:#000;">IO Server:</div>
<div class="sunk" style="left:474px;top:198px;width:178px;height:20px"><div class="dd"></div></div>
<div class="t" style="left:478px;top:203.15px;font-size:11px;color:#000;">All Node</div>
<div class="t" style="left:389.5px;top:240.36px;font-size:10.75px;color:#000;">Tag Name:</div>
<div class="sunk" style="left:474px;top:236px;width:178px;height:19px"></div>
<div class="t" style="left:660px;top:165.56px;font-size:10.75px;color:#000;">Tag Description:</div>
<div class="sunk" style="left:744px;top:161px;width:179px;height:19px"></div>
<div class="cb" style="left:744px;top:199px"></div>
<div class="t" style="left:761.5px;top:200.86px;font-size:10.75px;color:#000;">Case Matching</div>
<div class="a" style="left:79px;top:269px;width:881px;height:32px;border:1px solid #a0a0a0;border-right-color:#a0a0a0;box-shadow:inset 1px 1px 0 #fff, 1px 1px 0 #fff"></div>
<div class="cb" style="left:91px;top:277px"></div>
<div class="t" style="left:108px;top:277.86px;font-size:10.75px;color:#000;">Show List</div>
<div class="btn" style="left:661px;top:275px;width:63px;height:23px"><span style="top:5.11px;font-size:11px">Reset</span></div>
<div class="btn" style="left:733px;top:275px;width:63px;height:23px"><span style="top:5.11px;font-size:11px">Search</span></div>
<div class="btn" style="left:805px;top:275px;width:87px;height:23px"><span style="top:5.11px;font-size:11px">Soft Keyboard</span></div>
<div class="btn" style="left:898px;top:275px;width:35px;height:23px"><span style="top:5.11px;font-size:11px">&gt;&gt;</span></div>
<div class="a" style="left:79px;top:308px;width:548px;height:481px;background:#fff;border-left:1px solid #a0a0a0"></div>
<div class="a" style="left:81px;top:308px;width:535px;height:18px;background:#f0f0f0;border-bottom:2px solid #888"></div>
<div class="a" style="left:330px;top:308px;width:2px;height:18px;background:#888;"></div>
<div class="a" style="left:332px;top:308px;width:1px;height:18px;background:#fff;"></div>
<div class="a" style="left:410px;top:308px;width:2px;height:18px;background:#888;"></div>
<div class="a" style="left:412px;top:308px;width:1px;height:18px;background:#fff;"></div>
<div class="a" style="left:615px;top:308px;width:2px;height:18px;background:#888;"></div>
<div class="a" style="left:617px;top:308px;width:1px;height:18px;background:#fff;"></div>
<div class="a" style="left:617px;top:308px;width:10px;height:18px;background:#f0f0f0;border-bottom:2px solid #888"></div>
<div class="t" style="left:87.3px;top:311.09px;font-size:11.3px;color:#000;">Tag Name</div>
<div class="t" style="left:337.4px;top:311.09px;font-size:11.3px;color:#000;">Type</div>
<div class="t" style="left:417.4px;top:311.09px;font-size:11.3px;color:#000;">Description</div>
<div class="a" style="left:99px;top:345px;width:517px;height:16px;background:#f0f0f0;"></div>
<div class="a" style="left:81px;top:344px;width:535px;height:1px;background:#ececec;"></div>
<div class="a" style="left:81px;top:361px;width:535px;height:1px;background:#ececec;"></div>
<div class="a" style="left:81px;top:378px;width:535px;height:1px;background:#ececec;"></div>
<div class="a" style="left:81px;top:395px;width:535px;height:1px;background:#ececec;"></div>
<div class="a" style="left:81px;top:412px;width:535px;height:1px;background:#ececec;"></div>
<div class="a" style="left:81px;top:429px;width:535px;height:1px;background:#ececec;"></div>
<div class="a" style="left:81px;top:446px;width:535px;height:1px;background:#ececec;"></div>
<div class="a" style="left:81px;top:463px;width:535px;height:1px;background:#ececec;"></div>
<div class="a" style="left:81px;top:480px;width:535px;height:1px;background:#ececec;"></div>
<div class="a" style="left:81px;top:497px;width:535px;height:1px;background:#ececec;"></div>
<div class="a" style="left:81px;top:514px;width:535px;height:1px;background:#ececec;"></div>
<div class="a" style="left:81px;top:531px;width:535px;height:1px;background:#ececec;"></div>
<div class="a" style="left:81px;top:548px;width:535px;height:1px;background:#ececec;"></div>
<div class="a" style="left:81px;top:565px;width:535px;height:1px;background:#ececec;"></div>
<div class="a" style="left:81px;top:582px;width:535px;height:1px;background:#ececec;"></div>
<div class="a" style="left:81px;top:599px;width:535px;height:1px;background:#ececec;"></div>
<div class="a" style="left:81px;top:616px;width:535px;height:1px;background:#ececec;"></div>
<div class="a" style="left:81px;top:633px;width:535px;height:1px;background:#ececec;"></div>
<div class="a" style="left:81px;top:650px;width:535px;height:1px;background:#ececec;"></div>
<div class="a" style="left:81px;top:667px;width:535px;height:1px;background:#ececec;"></div>
<div class="a" style="left:81px;top:684px;width:535px;height:1px;background:#ececec;"></div>
<div class="a" style="left:81px;top:701px;width:535px;height:1px;background:#ececec;"></div>
<div class="a" style="left:81px;top:718px;width:535px;height:1px;background:#ececec;"></div>
<div class="a" style="left:81px;top:735px;width:535px;height:1px;background:#ececec;"></div>
<div class="a" style="left:81px;top:752px;width:535px;height:1px;background:#ececec;"></div>
<div class="a" style="left:81px;top:769px;width:535px;height:1px;background:#ececec;"></div>
<div class="a" style="left:81px;top:786px;width:535px;height:1px;background:#ececec;"></div>
<div class="a" style="left:331px;top:327px;width:1px;height:460px;background:#ececec;"></div>
<div class="a" style="left:410px;top:327px;width:1px;height:460px;background:#ececec;"></div>
<div class="a" style="left:616px;top:327px;width:1px;height:460px;background:#ececec;"></div>
<div class="a" style="left:626px;top:327px;width:1px;height:460px;background:#ececec;"></div>
<div class="a" style="left:80px;top:326px;width:1px;height:462px;background:#dcdcdc;"></div>
<div class="t" style="left:101.4px;top:331.82px;font-size:11.5px;color:#000;">bool1</div>
<div class="t" style="left:337px;top:331.82px;font-size:11.5px;color:#000;">Switch</div>
<div class="t" style="left:101.4px;top:348.82px;font-size:11.5px;color:#000;">dischargevalue1</div>
<div class="t" style="left:337px;top:348.82px;font-size:11.5px;color:#000;">Real</div>
<div class="t" style="left:101.4px;top:365.82px;font-size:11.5px;color:#000;">dischargevalue2</div>
<div class="t" style="left:337px;top:365.82px;font-size:11.5px;color:#000;">Real</div>
<div class="t" style="left:101.4px;top:382.82px;font-size:11.5px;color:#000;">fillvalue1</div>
<div class="t" style="left:337px;top:382.82px;font-size:11.5px;color:#000;">Real</div>
<div class="t" style="left:101.4px;top:399.82px;font-size:11.5px;color:#000;">fillvalue2</div>
<div class="t" style="left:337px;top:399.82px;font-size:11.5px;color:#000;">Real</div>
<div class="t" style="left:101.4px;top:416.82px;font-size:11.5px;color:#000;">flowmeter1</div>
<div class="t" style="left:337px;top:416.82px;font-size:11.5px;color:#000;">Real</div>
<div class="t" style="left:101.4px;top:433.82px;font-size:11.5px;color:#000;">flowmeter2</div>
<div class="t" style="left:337px;top:433.82px;font-size:11.5px;color:#000;">Real</div>
<div class="t" style="left:101.4px;top:450.82px;font-size:11.5px;color:#000;">int1</div>
<div class="t" style="left:337px;top:450.82px;font-size:11.5px;color:#000;">Integer</div>
<div class="t" style="left:101.4px;top:467.82px;font-size:11.5px;color:#000;">int1_yx</div>
<div class="t" style="left:337px;top:467.82px;font-size:11.5px;color:#000;">Integer</div>
<div class="t" style="left:101.4px;top:484.82px;font-size:11.5px;color:#000;">int2</div>
<div class="t" style="left:337px;top:484.82px;font-size:11.5px;color:#000;">Integer</div>
<div class="t" style="left:101.4px;top:501.82px;font-size:11.5px;color:#000;">levelmeter1</div>
<div class="t" style="left:337px;top:501.82px;font-size:11.5px;color:#000;">Real</div>
<div class="t" style="left:101.4px;top:518.82px;font-size:11.5px;color:#000;">levelmeter2</div>
<div class="t" style="left:337px;top:518.82px;font-size:11.5px;color:#000;">Real</div>
<div class="t" style="left:101.4px;top:535.82px;font-size:11.5px;color:#000;">real1</div>
<div class="t" style="left:337px;top:535.82px;font-size:11.5px;color:#000;">Real</div>
<div class="t" style="left:101.4px;top:552.82px;font-size:11.5px;color:#000;">real111</div>
<div class="t" style="left:337px;top:552.82px;font-size:11.5px;color:#000;">Real</div>
<div class="t" style="left:417px;top:552.82px;font-size:11.5px;color:#000;">supcon</div>
<div class="t" style="left:101.4px;top:569.82px;font-size:11.5px;color:#000;">str1</div>
<div class="t" style="left:337px;top:569.82px;font-size:11.5px;color:#000;">String</div>
<div class="t" style="left:101.4px;top:586.82px;font-size:11.5px;color:#000;">tag_Stru</div>
<div class="t" style="left:337px;top:586.82px;font-size:11.5px;color:#000;">PEM::Devic...</div>
<div class="t" style="left:101.4px;top:603.82px;font-size:11.5px;color:#000;">time1_yx</div>
<div class="t" style="left:337px;top:603.82px;font-size:11.5px;color:#000;">Real</div>
<svg class="a" style="left:86px;top:585px;" width="9" height="9" viewBox="0 0 9 9"><rect x="0.5" y="0.5" width="8" height="8" fill="#fff" stroke="#888"/><path d="M2 4.5 H7 M4.5 2 V7" stroke="#000"/></svg>
<div class="a" style="left:630px;top:307px;width:314px;height:464px;background:#fff;"></div>
<div class="t" style="left:634.5px;top:328.13px;font-size:10.9px;color:#000;">VALUE</div>
<div class="t" style="left:732.3px;top:327.78px;font-size:10.5px;color:#000;letter-spacing:-0.15px">Real-time Value</div>
<div class="t" style="left:634.5px;top:344.13px;font-size:10.9px;color:#000;">NAME</div>
<div class="t" style="left:732.3px;top:343.78px;font-size:10.5px;color:#000;letter-spacing:-0.15px">Name</div>
<div class="t" style="left:634.5px;top:360.13px;font-size:10.9px;color:#000;">DESC</div>
<div class="t" style="left:732.3px;top:359.78px;font-size:10.5px;color:#000;letter-spacing:-0.15px">Description</div>
<div class="t" style="left:634.5px;top:376.13px;font-size:10.9px;color:#000;">EU</div>
<div class="t" style="left:732.3px;top:375.78px;font-size:10.5px;color:#000;letter-spacing:-0.15px">Unit</div>
<div class="t" style="left:634.5px;top:392.13px;font-size:10.9px;color:#000;">RAWHI</div>
<div class="t" style="left:732.3px;top:391.78px;font-size:10.5px;color:#000;letter-spacing:-0.15px">Initial Value Limit</div>
<div class="t" style="left:634.5px;top:408.13px;font-size:10.9px;color:#000;">RAWLO</div>
<div class="t" style="left:732.3px;top:407.78px;font-size:10.5px;color:#000;letter-spacing:-0.15px">Lower Initial Value</div>
<div class="t" style="left:634.5px;top:424.13px;font-size:10.9px;color:#000;">EUHI</div>
<div class="t" style="left:732.3px;top:423.78px;font-size:10.5px;color:#000;letter-spacing:-0.15px">High Engineering Value</div>
<div class="t" style="left:634.5px;top:440.13px;font-size:10.9px;color:#000;">EULO</div>
<div class="t" style="left:732.3px;top:439.78px;font-size:10.5px;color:#000;letter-spacing:-0.15px">Lower Engineering Value</div>
<div class="t" style="left:634.5px;top:456.13px;font-size:10.9px;color:#000;">QUALITY</div>
<div class="t" style="left:732.3px;top:455.78px;font-size:10.5px;color:#000;letter-spacing:-0.15px">Quality Code</div>
<div class="t" style="left:634.5px;top:472.13px;font-size:10.9px;color:#000;">TIMESTAMP</div>
<div class="t" style="left:732.3px;top:471.78px;font-size:10.5px;color:#000;letter-spacing:-0.15px">Timestamp</div>
<div class="t" style="left:634.5px;top:488.13px;font-size:10.9px;color:#000;">HH</div>
<div class="t" style="left:732.3px;top:487.78px;font-size:10.5px;color:#000;letter-spacing:-0.15px">HH</div>
<div class="t" style="left:634.5px;top:504.13px;font-size:10.9px;color:#000;">HI</div>
<div class="t" style="left:732.3px;top:503.78px;font-size:10.5px;color:#000;letter-spacing:-0.15px">H</div>
<div class="t" style="left:634.5px;top:520.13px;font-size:10.9px;color:#000;">LL</div>
<div class="t" style="left:732.3px;top:519.78px;font-size:10.5px;color:#000;letter-spacing:-0.15px">LL</div>
<div class="t" style="left:634.5px;top:536.13px;font-size:10.9px;color:#000;">LO</div>
<div class="t" style="left:732.3px;top:535.78px;font-size:10.5px;color:#000;letter-spacing:-0.15px">L</div>
<div class="t" style="left:634.5px;top:552.13px;font-size:10.9px;color:#000;">H3</div>
<div class="t" style="left:732.3px;top:551.78px;font-size:10.5px;color:#000;letter-spacing:-0.15px">H3 Alarm</div>
<div class="t" style="left:634.5px;top:568.13px;font-size:10.9px;color:#000;">L3</div>
<div class="t" style="left:732.3px;top:567.78px;font-size:10.5px;color:#000;letter-spacing:-0.15px">L3 Alarm</div>
<div class="t" style="left:634.5px;top:584.13px;font-size:10.9px;color:#000;">RATE</div>
<div class="t" style="left:732.3px;top:583.78px;font-size:10.5px;color:#000;letter-spacing:-0.15px">Change Rate Alarm</div>
<div class="t" style="left:634.5px;top:600.13px;font-size:10.9px;color:#000;">ALMENAB</div>
<div class="t" style="left:732.3px;top:599.78px;font-size:10.5px;color:#000;letter-spacing:-0.15px">Alarm Enable</div>
<div class="t" style="left:634.5px;top:616.13px;font-size:10.9px;color:#000;">ALMDELAY</div>
<div class="t" style="left:732.3px;top:615.78px;font-size:10.5px;color:#000;letter-spacing:-0.15px">Alarm Delay</div>
<div class="t" style="left:634.5px;top:632.13px;font-size:10.9px;color:#000;">HHENAB</div>
<div class="t" style="left:732.3px;top:631.78px;font-size:10.5px;color:#000;letter-spacing:-0.15px">HH Limit Enables</div>
<div class="t" style="left:634.5px;top:648.13px;font-size:10.9px;color:#000;">HIENAB</div>
<div class="t" style="left:732.3px;top:647.78px;font-size:10.5px;color:#000;letter-spacing:-0.15px">H Limit Enables</div>
<div class="t" style="left:634.5px;top:664.13px;font-size:10.9px;color:#000;">LLENAB</div>
<div class="t" style="left:732.3px;top:663.78px;font-size:10.5px;color:#000;letter-spacing:-0.15px">LL Limit Enables</div>
<div class="t" style="left:634.5px;top:680.13px;font-size:10.9px;color:#000;">LOENAB</div>
<div class="t" style="left:732.3px;top:679.78px;font-size:10.5px;color:#000;letter-spacing:-0.15px">L Limit Enables</div>
<div class="t" style="left:634.5px;top:696.13px;font-size:10.9px;color:#000;">H3ENAB</div>
<div class="t" style="left:732.3px;top:695.78px;font-size:10.5px;color:#000;letter-spacing:-0.15px">H3 Alarm Enables</div>
<div class="t" style="left:634.5px;top:712.13px;font-size:10.9px;color:#000;">L3ENAB</div>
<div class="t" style="left:732.3px;top:711.78px;font-size:10.5px;color:#000;letter-spacing:-0.15px">L3 Alarm Enables</div>
<div class="t" style="left:634.5px;top:728.13px;font-size:10.9px;color:#000;">RATEENAB</div>
<div class="t" style="left:732.3px;top:727.78px;font-size:10.5px;color:#000;letter-spacing:-0.15px">Change Range Enables</div>
<div class="t" style="left:634.5px;top:744.13px;font-size:10.9px;color:#000;">HHSTATE</div>
<div class="t" style="left:732.3px;top:743.78px;font-size:10.5px;color:#000;letter-spacing:-0.15px">HH Limit Alarm Status</div>
<div class="t" style="left:634.5px;top:760.13px;font-size:10.9px;color:#000;">HISTATE</div>
<div class="t" style="left:732.3px;top:759.78px;font-size:10.5px;color:#000;letter-spacing:-0.15px">H Limit Alarm Status</div>
<div class="a" style="left:630px;top:341px;width:313px;height:1px;background:#ececec;"></div>
<div class="a" style="left:630px;top:357px;width:313px;height:1px;background:#ececec;"></div>
<div class="a" style="left:630px;top:373px;width:313px;height:1px;background:#ececec;"></div>
<div class="a" style="left:630px;top:389px;width:313px;height:1px;background:#ececec;"></div>
<div class="a" style="left:630px;top:405px;width:313px;height:1px;background:#ececec;"></div>
<div class="a" style="left:630px;top:421px;width:313px;height:1px;background:#ececec;"></div>
<div class="a" style="left:630px;top:437px;width:313px;height:1px;background:#ececec;"></div>
<div class="a" style="left:630px;top:453px;width:313px;height:1px;background:#ececec;"></div>
<div class="a" style="left:630px;top:469px;width:313px;height:1px;background:#ececec;"></div>
<div class="a" style="left:630px;top:485px;width:313px;height:1px;background:#ececec;"></div>
<div class="a" style="left:630px;top:501px;width:313px;height:1px;background:#ececec;"></div>
<div class="a" style="left:630px;top:517px;width:313px;height:1px;background:#ececec;"></div>
<div class="a" style="left:630px;top:533px;width:313px;height:1px;background:#ececec;"></div>
<div class="a" style="left:630px;top:549px;width:313px;height:1px;background:#ececec;"></div>
<div class="a" style="left:630px;top:565px;width:313px;height:1px;background:#ececec;"></div>
<div class="a" style="left:630px;top:581px;width:313px;height:1px;background:#ececec;"></div>
<div class="a" style="left:630px;top:597px;width:313px;height:1px;background:#ececec;"></div>
<div class="a" style="left:630px;top:613px;width:313px;height:1px;background:#ececec;"></div>
<div class="a" style="left:630px;top:629px;width:313px;height:1px;background:#ececec;"></div>
<div class="a" style="left:630px;top:645px;width:313px;height:1px;background:#ececec;"></div>
<div class="a" style="left:630px;top:661px;width:313px;height:1px;background:#ececec;"></div>
<div class="a" style="left:630px;top:677px;width:313px;height:1px;background:#ececec;"></div>
<div class="a" style="left:630px;top:693px;width:313px;height:1px;background:#ececec;"></div>
<div class="a" style="left:630px;top:709px;width:313px;height:1px;background:#ececec;"></div>
<div class="a" style="left:630px;top:725px;width:313px;height:1px;background:#ececec;"></div>
<div class="a" style="left:630px;top:741px;width:313px;height:1px;background:#ececec;"></div>
<div class="a" style="left:630px;top:757px;width:313px;height:1px;background:#ececec;"></div>
<div class="a" style="left:729px;top:324px;width:1px;height:446px;background:#ececec;"></div>
<div class="a" style="left:630px;top:307px;width:314px;height:17px;background:#f0f0f0;border-bottom:2px solid #888"></div>
<div class="a" style="left:729px;top:307px;width:2px;height:17px;background:#888;"></div>
<div class="a" style="left:731px;top:307px;width:1px;height:17px;background:#fff;"></div>
<div class="t" style="left:634.5px;top:310.82px;font-size:10.8px;color:#000;">Property Name</div>
<div class="t" style="left:733px;top:310.82px;font-size:10.8px;color:#000;">Description</div>
<div class="a" style="left:944px;top:307px;width:15px;height:463px;background:#f0f0f0;"></div>
<div class="a" style="left:944px;top:324px;width:15px;height:164px;background:#cdcdcd;"></div>
<svg class="a" style="left:946px;top:312px;" width="11" height="8" viewBox="0 0 11 8"><path d="M1.5 6 L5.5 2 L9.5 6" fill="none" stroke="#606060" stroke-width="1.5"/></svg>
<svg class="a" style="left:946px;top:757px;" width="11" height="8" viewBox="0 0 11 8"><path d="M1.5 2 L5.5 6 L9.5 2" fill="none" stroke="#606060" stroke-width="1.5"/></svg>
<div class="a" style="left:630px;top:770px;width:329px;height:16px;background:#f0f0f0;"></div>
<div class="a" style="left:647px;top:771px;width:277px;height:14px;background:#cdcdcd;"></div>
<svg class="a" style="left:633px;top:773px;" width="8" height="11" viewBox="0 0 8 11"><path d="M6 1.5 L2 5.5 L6 9.5" fill="none" stroke="#606060" stroke-width="1.5"/></svg>
<svg class="a" style="left:931px;top:773px;" width="8" height="11" viewBox="0 0 8 11"><path d="M2 1.5 L6 5.5 L2 9.5" fill="none" stroke="#606060" stroke-width="1.5"/></svg>
<div class="a" style="left:77px;top:787px;width:885px;height:2px;background:#8a8a8a;"></div>
<div class="t" style="left:96.2px;top:798.35px;font-size:11px;color:#000;">Tag Count:</div>
<div class="t" style="left:160.8px;top:798.35px;font-size:11px;color:#000;">17 (20)</div>
<div class="btn" style="left:698px;top:796px;width:74px;height:25px"><span style="top:4.15px;font-size:11px">Reload</span></div>
<div class="btn" style="left:787px;top:796px;width:74px;height:25px"><span style="top:4.15px;font-size:11px">OK</span></div>
<div class="btn" style="left:875px;top:796px;width:74px;height:25px"><span style="top:4.15px;font-size:11px">Cancel</span></div>
<div class="a" style="left:71px;top:326px;width:895px;height:496px;border:5px solid #f25454;border-radius:2px"></div></body></html>
